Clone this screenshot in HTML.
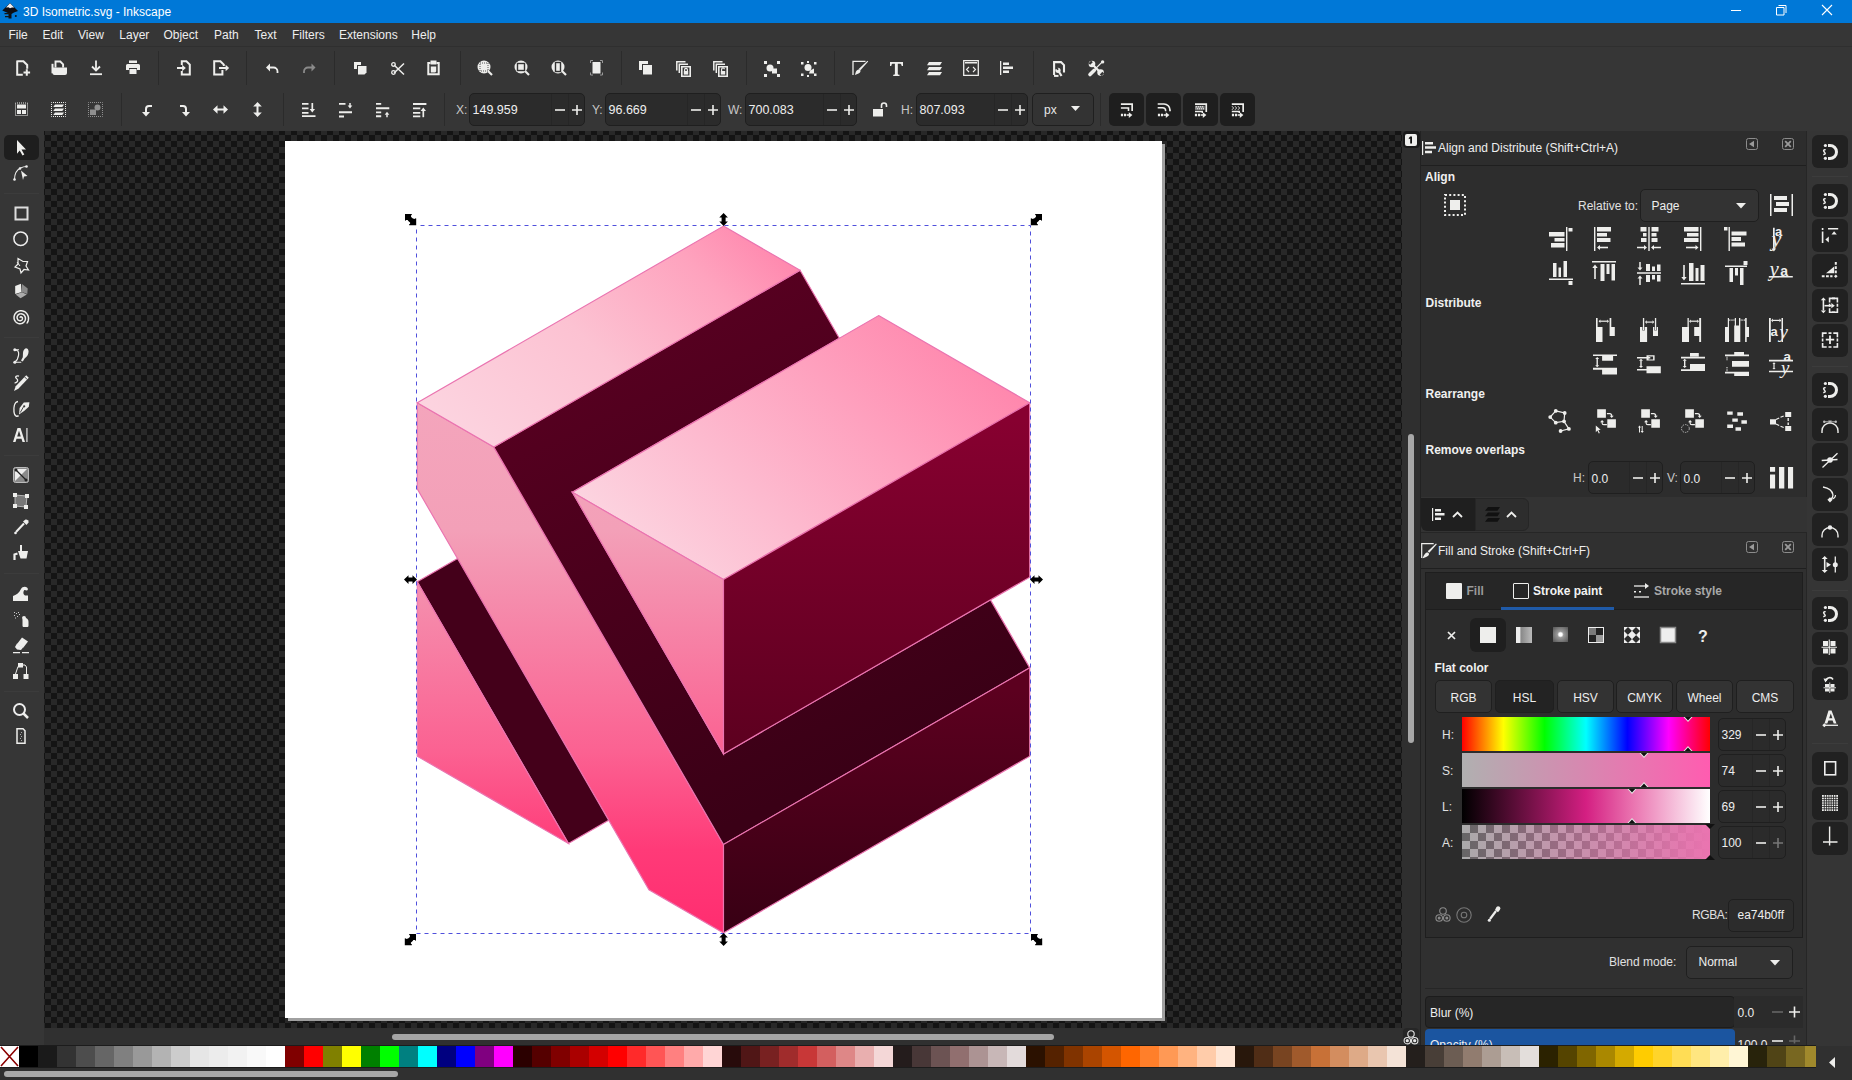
<!DOCTYPE html><html><head><meta charset="utf-8"><style>
*{box-sizing:border-box}
html,body{margin:0;padding:0}
body{width:1852px;height:1080px;overflow:hidden;position:relative;background:#333333;font-family:"Liberation Sans", sans-serif;font-size:12px;color:#e6e6e6}
.a{position:absolute}
.t{position:absolute;white-space:pre;line-height:1}
svg{position:absolute;overflow:visible}
</style></head><body><div class="a" style="left:44px;top:131px;width:1358px;height:897px;background-color:#282828;background-image:linear-gradient(45deg,#141414 25%,transparent 25%,transparent 75%,#141414 75%),linear-gradient(45deg,#141414 25%,transparent 25%,transparent 75%,#141414 75%);background-size:12px 12px;background-position:-41px -128px,-47px -134px"></div><div class="a" style="left:1162px;top:144px;width:3px;height:877px;background:#a0a0a0;"></div><div class="a" style="left:288px;top:1018px;width:877px;height:3px;background:#a0a0a0;"></div><div class="a" style="left:285px;top:141px;width:877px;height:877px;background:#ffffff;"></div><svg style="left:0;top:0" width="1852" height="1080" viewBox="0 0 1852 1080"><defs><linearGradient id="gtA" gradientUnits="userSpaceOnUse" x1="417.2" y1="402.8" x2="674.9" y2="145.1"><stop offset="0" stop-color="#fcd4e0"/><stop offset="0.45" stop-color="#fcc2d2"/><stop offset="0.8" stop-color="#fea3be"/><stop offset="1" stop-color="#ff88ae"/></linearGradient><linearGradient id="gtB" gradientUnits="userSpaceOnUse" x1="570.4" y1="491.1" x2="844.2" y2="217.3"><stop offset="0" stop-color="#fcd4e0"/><stop offset="1" stop-color="#ff87ad"/></linearGradient><linearGradient id="gl" gradientUnits="userSpaceOnUse" x1="0" y1="403" x2="0" y2="932"><stop offset="0" stop-color="#f4a5bc"/><stop offset="0.24" stop-color="#f3a0b8"/><stop offset="0.372" stop-color="#f58cac"/><stop offset="0.656" stop-color="#fb6292"/><stop offset="0.845" stop-color="#ff3a78"/><stop offset="1" stop-color="#ff2d70"/></linearGradient><linearGradient id="gd" gradientUnits="userSpaceOnUse" x1="800" y1="270" x2="1000" y2="700"><stop offset="0" stop-color="#560020"/><stop offset="1" stop-color="#3a0016"/></linearGradient><linearGradient id="gr2" gradientUnits="userSpaceOnUse" x1="0" y1="420" x2="0" y2="756"><stop offset="0" stop-color="#870030"/><stop offset="1" stop-color="#5c001f"/></linearGradient><linearGradient id="gr3" gradientUnits="userSpaceOnUse" x1="0" y1="690" x2="0" y2="932"><stop offset="0" stop-color="#5c001f"/><stop offset="1" stop-color="#380014"/></linearGradient><linearGradient id="gl2" gradientUnits="userSpaceOnUse" x1="0" y1="491" x2="0" y2="757"><stop offset="0" stop-color="#f4a5bc"/><stop offset="1" stop-color="#fa5890"/></linearGradient><linearGradient id="gl3" gradientUnits="userSpaceOnUse" x1="0" y1="581" x2="0" y2="845"><stop offset="0" stop-color="#f68cac"/><stop offset="1" stop-color="#ff2a70"/></linearGradient></defs><polygon points="417.25,402.80 493.81,446.98 723.50,844.55 723.50,932.90 648.93,889.87 417.25,488.85" fill="url(#gl)" stroke="#ea74b0" stroke-width="1.15"/><polygon points="417.25,581.80 457.52,558.56 608.66,820.17 568.38,843.40" fill="#44001a" stroke="#ea74b0" stroke-width="1.15"/><polygon points="417.25,581.80 417.25,756.20 568.38,843.40" fill="url(#gl)" stroke="#ea74b0" stroke-width="1.15"/><polygon points="493.81,446.98 800.06,270.27 839.34,338.26 572.37,492.30 723.50,753.90 990.47,599.86 1029.75,667.85 723.50,844.55" fill="url(#gd)" stroke="#ea74b0" stroke-width="1.15"/><polygon points="723.50,226.10 800.06,270.27 493.81,446.98 417.25,402.80" fill="url(#gtA)" stroke="#ea74b0" stroke-width="1.15"/><polygon points="878.62,315.60 1029.75,402.80 723.50,579.50 572.37,492.30" fill="url(#gtB)" stroke="#ea74b0" stroke-width="1.15"/><polygon points="572.37,492.30 723.50,579.50 723.50,753.90" fill="url(#gl)" stroke="#ea74b0" stroke-width="1.15"/><polygon points="1029.75,402.80 1029.75,577.20 723.50,753.90 723.50,579.50" fill="url(#gr2)" stroke="#ea74b0" stroke-width="1.15"/><polygon points="1029.75,667.85 1029.75,756.20 723.50,932.90 723.50,844.55" fill="url(#gr3)" stroke="#ea74b0" stroke-width="1.15"/><rect x="416.5" y="225.5" width="614" height="708" fill="none" stroke="#5050dc" stroke-width="1" stroke-dasharray="4 4" stroke-dashoffset="4"/><path transform="translate(405,214)" d="M0 0H7.1L6 1.7 6.1 2.9 7.9 4.6 10.1 5.1 10.6 4.1 11.2 4.6V11.2H4.2L4.1 10.2 5.1 9.7 5.1 8.4 4.1 7.7 3.1 6.7 2.7 5.9 1 6 0.5 6.9 0 6.3Z" fill="#000"/><path transform="translate(1031,934)" d="M0 0H7.1L6 1.7 6.1 2.9 7.9 4.6 10.1 5.1 10.6 4.1 11.2 4.6V11.2H4.2L4.1 10.2 5.1 9.7 5.1 8.4 4.1 7.7 3.1 6.7 2.7 5.9 1 6 0.5 6.9 0 6.3Z" fill="#000"/><path transform="translate(1042,214) scale(-1,1)" d="M0 0H7.1L6 1.7 6.1 2.9 7.9 4.6 10.1 5.1 10.6 4.1 11.2 4.6V11.2H4.2L4.1 10.2 5.1 9.7 5.1 8.4 4.1 7.7 3.1 6.7 2.7 5.9 1 6 0.5 6.9 0 6.3Z" fill="#000"/><path transform="translate(416,934) scale(-1,1)" d="M0 0H7.1L6 1.7 6.1 2.9 7.9 4.6 10.1 5.1 10.6 4.1 11.2 4.6V11.2H4.2L4.1 10.2 5.1 9.7 5.1 8.4 4.1 7.7 3.1 6.7 2.7 5.9 1 6 0.5 6.9 0 6.3Z" fill="#000"/><path transform="translate(404,575)" d="M0 4.6L4.5 0.3V2.6H8.5V0.3L13 4.6 8.5 8.9V6.6H4.5V8.9Z" fill="#000"/><path transform="translate(1030,575)" d="M0 4.6L4.5 0.3V2.6H8.5V0.3L13 4.6 8.5 8.9V6.6H4.5V8.9Z" fill="#000"/><path transform="translate(719,213)" d="M4.6 0L8.9 4.5H6.6V8.5H8.9L4.6 13 0.3 8.5H2.6V4.5H0.3Z" fill="#000"/><path transform="translate(719,933)" d="M4.6 0L8.9 4.5H6.6V8.5H8.9L4.6 13 0.3 8.5H2.6V4.5H0.3Z" fill="#000"/></svg><div class="a" style="left:44px;top:1028px;width:1358px;height:18px;background:#303030;"></div><div class="a" style="left:392px;top:1034px;width:662px;height:6px;background:#a5a5a5;border-radius:3px"></div><div class="a" style="left:0px;top:0px;width:1852px;height:23px;background:#0078d7;"></div><svg style="left:0px;top:0px" width="22" height="22" viewBox="0 0 22 22"><path d="M10 3L18 11L14 12.5L11.5 14V18.5H8.5V13.2L2.3 10.5Z" fill="#0d0d12" /><path d="M10 3.2L6 7.5L8.5 7.2L10 8.2L12 7.4L14.2 7.6Z" fill="#f0f0f0" /><path d="M4.5 13h6v1.3h-6zM5 16h4v1.3H5z" fill="#151515" /><circle cx="15.8" cy="16" r="1" fill="#111"/></svg><div class="t" style="left:23px;top:5.84px;font-size:12px;color:#ffffff;font-weight:400;">3D Isometric.svg - Inkscape</div><svg style="left:1730px;top:3px" width="20" height="14"><path d="M1 7.5h10" stroke="#fff" stroke-width="1"/></svg><svg style="left:1775px;top:3px" width="14" height="14"><path d="M3.5 2.5h7.5v7.5M1.5 4.5h7.5v7.5h-7.5z" fill="none" stroke="#fff" stroke-width="1"/></svg><svg style="left:1821px;top:4px" width="14" height="14"><path d="M1 1l10 10M11 1L1 11" stroke="#fff" stroke-width="1.1"/></svg><div class="a" style="left:0px;top:23px;width:1852px;height:23px;background:#363636;"></div><div class="t" style="left:8.4px;top:28.84px;font-size:12px;color:#eeeeee;font-weight:400;">File</div><div class="t" style="left:42.5px;top:28.84px;font-size:12px;color:#eeeeee;font-weight:400;">Edit</div><div class="t" style="left:78px;top:28.84px;font-size:12px;color:#eeeeee;font-weight:400;">View</div><div class="t" style="left:119.3px;top:28.84px;font-size:12px;color:#eeeeee;font-weight:400;">Layer</div><div class="t" style="left:163.4px;top:28.84px;font-size:12px;color:#eeeeee;font-weight:400;">Object</div><div class="t" style="left:214px;top:28.84px;font-size:12px;color:#eeeeee;font-weight:400;">Path</div><div class="t" style="left:254.5px;top:28.84px;font-size:12px;color:#eeeeee;font-weight:400;">Text</div><div class="t" style="left:292px;top:28.84px;font-size:12px;color:#eeeeee;font-weight:400;">Filters</div><div class="t" style="left:339px;top:28.84px;font-size:12px;color:#eeeeee;font-weight:400;">Extensions</div><div class="t" style="left:411.3px;top:28.84px;font-size:12px;color:#eeeeee;font-weight:400;">Help</div><div class="a" style="left:0px;top:46px;width:1852px;height:85px;background:#363636;"></div><div class="a" style="left:0px;top:46px;width:1852px;height:1px;background:#2f2f2f;"></div><div class="a" style="left:158px;top:51px;width:1px;height:34px;background:#2b2b2b;"></div><div class="a" style="left:246px;top:51px;width:1px;height:34px;background:#2b2b2b;"></div><div class="a" style="left:334px;top:51px;width:1px;height:34px;background:#2b2b2b;"></div><div class="a" style="left:460px;top:51px;width:1px;height:34px;background:#2b2b2b;"></div><div class="a" style="left:621px;top:51px;width:1px;height:34px;background:#2b2b2b;"></div><div class="a" style="left:746px;top:51px;width:1px;height:34px;background:#2b2b2b;"></div><div class="a" style="left:834px;top:51px;width:1px;height:34px;background:#2b2b2b;"></div><div class="a" style="left:1033px;top:51px;width:1px;height:34px;background:#2b2b2b;"></div><div class="a" style="left:121px;top:93px;width:1px;height:33px;background:#2b2b2b;"></div><div class="a" style="left:283px;top:93px;width:1px;height:33px;background:#2b2b2b;"></div><div class="a" style="left:444px;top:93px;width:1px;height:33px;background:#2b2b2b;"></div><div class="a" style="left:1100px;top:93px;width:1px;height:33px;background:#2b2b2b;"></div><svg style="left:16px;top:60px" width="16" height="16" viewBox="0 0 16 16"><path d="M1.2 1.2h6.2l3.8 3.8v3.8M1.2 0.4v14.4h5.6" fill="none" stroke="#eeeeec" stroke-width="2" /><path d="M10.8 9.2v6.6M7.5 12.5h6.6" fill="none" stroke="#eeeeec" stroke-width="2" /></svg><svg style="left:51px;top:60px" width="16" height="16" viewBox="0 0 16 16"><path d="M4.5 7.5V1.5h4.8l2.8 2.8V7.5" fill="none" stroke="#eeeeec" stroke-width="1.9" /><path d="M1.5 3.8v9.5" fill="none" stroke="#eeeeec" stroke-width="2" /><path d="M1.5 7.5h14.5v5.5a2 2 0 0 1-2 2h-10.5a2 2 0 0 1-2-2z" fill="#eeeeec" /></svg><svg style="left:90px;top:60px" width="16" height="16" viewBox="0 0 16 16"><path d="M6 0.5v9.5" fill="none" stroke="#eeeeec" stroke-width="1.8" /><path d="M2 6.5l4 4 4-4" fill="none" stroke="#eeeeec" stroke-width="1.8" /><path d="M0 14.2h12" fill="none" stroke="#eeeeec" stroke-width="1.8" /></svg><svg style="left:126px;top:60px" width="16" height="16" viewBox="0 0 16 16"><path d="M3 0.5h8v2.5h-8z" fill="#eeeeec" /><path d="M1.5 4h11a1.5 1.5 0 0 1 1.5 1.5v4.5h-3v-2h-8v2h-3v-4.5a1.5 1.5 0 0 1 1.5-1.5z" fill="#eeeeec" /><path d="M3.5 9h7v5h-7z" fill="#eeeeec" /></svg><svg style="left:177px;top:60px" width="16" height="16" viewBox="0 0 16 16"><path d="M4.8 5V1.2h4.6l3.4 3.4V14.4H4.8V11" fill="none" stroke="#eeeeec" stroke-width="2" /><path d="M0 8h6.5" fill="none" stroke="#eeeeec" stroke-width="2" /><path d="M5.2 4.8l3.6 3.2-3.6 3.2z" fill="#eeeeec" /></svg><svg style="left:213px;top:60px" width="16" height="16" viewBox="0 0 16 16"><path d="M10.8 6V4.6L7.4 1.2H1.2v13.2h8.2V10" fill="none" stroke="#eeeeec" stroke-width="2" /><path d="M6 8h7.5" fill="none" stroke="#eeeeec" stroke-width="2" /><path d="M12.6 4.8l3.6 3.2-3.6 3.2z" fill="#eeeeec" /></svg><svg style="left:266px;top:63px" width="16" height="16" viewBox="0 0 16 16"><path d="M2.5 4.5h5a4 4 0 0 1 4 4V10" fill="none" stroke="#eeeeec" stroke-width="1.8" /><path d="M0 4.5l4-4v8z" fill="#eeeeec" /></svg><svg style="left:303px;top:63px" width="16" height="16" viewBox="0 0 16 16"><path d="M10 4.5h-5a4 4 0 0 0-4 4V10" fill="none" stroke="#8a8a8a" stroke-width="1.8" /><path d="M12.5 4.5l-4-4v8z" fill="#8a8a8a" /></svg><svg style="left:354px;top:62px" width="16" height="16" viewBox="0 0 16 16"><path d="M0 0h7v3h-4v4h-3z" fill="#eeeeec" /><path d="M4 4h8.5v6.5l-2 2h-6.5z" fill="#eeeeec" /></svg><svg style="left:391px;top:62px" width="14" height="13" viewBox="0 0 14 13"><path d="M3 3l10 9.5M13 1.5L3 11" fill="none" stroke="#eeeeec" stroke-width="1.5" /><circle cx="2.5" cy="2.5" r="1.8" fill="none" stroke="#eeeeec" stroke-width="1.3"/><circle cx="2.5" cy="10.5" r="1.8" fill="none" stroke="#eeeeec" stroke-width="1.3"/></svg><svg style="left:427px;top:60px" width="16" height="16" viewBox="0 0 16 16"><path d="M9.5 3h2.2v11.3H1.3V3h2.2" fill="none" stroke="#eeeeec" stroke-width="2" /><path d="M3.5 0.5h6v4h-6z" fill="#eeeeec" /><path d="M3.8 6.5h5.4v5l-1 1H3.8z" fill="#eeeeec" /></svg><svg style="left:477px;top:60px" width="16" height="16" viewBox="0 0 16 16"><circle cx="7" cy="7" r="6.5" fill="#eeeeec"/><path d="M11 11l4 4" fill="none" stroke="#eeeeec" stroke-width="2.2" /><rect x="3" y="3" width="8" height="8" fill="#eeeeec" stroke="#555" stroke-width="1" stroke-dasharray="1 1"/></svg><svg style="left:514px;top:60px" width="16" height="16" viewBox="0 0 16 16"><circle cx="7" cy="7" r="6.5" fill="#eeeeec"/><path d="M11 11l4 4" fill="none" stroke="#eeeeec" stroke-width="2.2" /><rect x="3.5" y="3.5" width="7" height="7" fill="none" stroke="#333" stroke-width="1.4"/></svg><svg style="left:551px;top:60px" width="16" height="16" viewBox="0 0 16 16"><circle cx="7" cy="7" r="6.5" fill="#eeeeec"/><path d="M11 11l4 4" fill="none" stroke="#eeeeec" stroke-width="2.2" /><rect x="4.5" y="2.5" width="5" height="9" fill="none" stroke="#333" stroke-width="1.4"/></svg><svg style="left:590px;top:60px" width="13" height="16" viewBox="0 0 13 16"><path d="M2.5 2h8v11.5h-8z" fill="#eeeeec" /><path d="M0.5 3V0.5H3M10 0.5h2.5V3M0.5 12.5V15H3M10 15h2.5v-2.5" fill="none" stroke="#999" stroke-width="1" /></svg><svg style="left:639px;top:61px" width="16" height="16" viewBox="0 0 16 16"><path d="M0 0h9v3h-6v6h-3z" fill="#eeeeec" /><path d="M4 4h9v9.5h-9z" fill="#eeeeec" /></svg><svg style="left:676px;top:61px" width="16" height="16" viewBox="0 0 16 16"><path d="M0.8 9.5V0.8h8.7" fill="none" stroke="#eeeeec" stroke-width="1.5" /><path d="M3.3 12V3.3h8.7" fill="none" stroke="#eeeeec" stroke-width="1.5" /><path d="M5.8 15.2V5.8h8.4v9.4z" fill="none" stroke="#eeeeec" stroke-width="1.6" /><path d="M7.8 10h4.4v3.6H7.8z" fill="#eeeeec" /><path d="M8.6 10.2V8.8a1.4 1.4 0 0 1 2.8 0v1.4" fill="none" stroke="#eeeeec" stroke-width="1.2" /></svg><svg style="left:713px;top:61px" width="16" height="16" viewBox="0 0 16 16"><path d="M0.8 9.5V0.8h8.7" fill="none" stroke="#eeeeec" stroke-width="1.5" /><path d="M3.3 12V3.3h8.7" fill="none" stroke="#eeeeec" stroke-width="1.5" /><path d="M5.8 15.2V5.8h8.4v9.4z" fill="none" stroke="#eeeeec" stroke-width="1.6" /><path d="M7.8 10h4.4v3.6H7.8z" fill="#eeeeec" /><path d="M8.6 10.2V8.3a1.4 1.4 0 0 1 2.8 0" fill="none" stroke="#eeeeec" stroke-width="1.2" /></svg><svg style="left:764px;top:61px" width="16" height="16" viewBox="0 0 16 16"><path d="M0 0h3v3h-3zM13 0h3v3h-3zM0 13h3v3h-3zM13 13h3v3h-3z" fill="#eeeeec" /><circle cx="6" cy="7" r="3.5" fill="#eeeeec"/><path d="M8 7.5h5v5h-5z" fill="#eeeeec" /></svg><svg style="left:801px;top:61px" width="16" height="16" viewBox="0 0 16 16"><path d="M0 1h2.5v2.5h-2.5zM13 1h2.5v2.5h-2.5zM0 12.5h2.5v2.5h-2.5zM13 12.5h2.5v2.5h-2.5zM6 0h2v2h-2zM6 14h2v2h-2z" fill="#eeeeec" /><circle cx="7" cy="6.5" r="3.5" fill="#eeeeec"/><path d="M9 9.5l4-2v5h-5z" fill="#eeeeec" /></svg><svg style="left:852px;top:60px" width="16" height="16" viewBox="0 0 16 16"><path d="M1 15V1.3h12.5" fill="none" stroke="#eeeeec" stroke-width="1.3" /><path d="M15.5 0.8l0.7 0.7-8 9-1.5-1.5z" fill="#eeeeec" /><path d="M4 11.5c1.5-2 3-2.5 4-1.5s0.5 2.5-1.5 3.5c-1 0.5-2.5 1-3.5 1.5c0.3-1 0.5-2.5 1-3.5z" fill="#eeeeec" /></svg><svg style="left:890px;top:62px" width="14" height="14" viewBox="0 0 14 14"><path d="M0 0h13v4h-1.3c-0.2-1.7-0.8-2.3-2.4-2.3h-1.5v10c0 0.8 0.5 1.1 1.7 1.1v1.2h-6.3v-1.2c1.2 0 1.7-0.3 1.7-1.1V1.7H3.4C1.8 1.7 1.5 2.3 1.3 4H0z" fill="#eeeeec" /></svg><svg style="left:927px;top:62px" width="15" height="14" viewBox="0 0 15 14"><path d="M2 0h13l-2 3.2h-13zM2 5h13l-2 3.2h-13zM2 10h13l-2 3.2h-13z" fill="#eeeeec" /></svg><svg style="left:963px;top:60px" width="16" height="16" viewBox="0 0 16 16"><path d="M0.7 0.7h14.6v14.6H0.7z" fill="none" stroke="#eeeeec" stroke-width="1.3" /><path d="M2 2h12v1.5h-12z" fill="#eeeeec" /><path d="M6 7l-2.5 2.5 2.5 2.5M10 7l2.5 2.5L10 12" fill="none" stroke="#eeeeec" stroke-width="1.1" /></svg><svg style="left:1000px;top:61px" width="16" height="16" viewBox="0 0 16 16"><path d="M0 0h1.3v14h-1.3z" fill="#eeeeec" /><path d="M3 1.5h6v2.5h-6zM3 5.5h10v2.5h-10zM3 9.5h6v2.5h-6z" fill="#eeeeec" /></svg><svg style="left:1052px;top:60px" width="15" height="17" viewBox="0 0 15 17"><path d="M2.1 15V2.1H9L12 5.1V12.6" fill="none" stroke="#eeeeec" stroke-width="2.1" /><path d="M2 15.9h4.5" fill="none" stroke="#eeeeec" stroke-width="2" /><circle cx="6" cy="10.3" r="2.6" fill="#eeeeec"/><path d="M3.5 8.5l2.2 1.8 1-1.2-2-2z" fill="#363636" /><path d="M6.5 11l3 5" fill="none" stroke="#eeeeec" stroke-width="2.2" /></svg><svg style="left:1088px;top:60px" width="17" height="17" viewBox="0 0 17 17"><path d="M5 5L12 12" fill="none" stroke="#eeeeec" stroke-width="2.2" /><circle cx="4" cy="4" r="3.3" fill="#eeeeec"/><circle cx="12.6" cy="12.6" r="3.3" fill="#eeeeec"/><path d="M0.5 3.2L3.2 0.5 4.8 2.2 2.2 4.8z" fill="#363636" /><path d="M16.1 13.4L13.4 16.1 11.8 14.4 14.4 11.8z" fill="#363636" /><path d="M6.2 10L14.3 1.9" fill="none" stroke="#eeeeec" stroke-width="1.2" /><circle cx="14.6" cy="1.9" r="1.7" fill="#eeeeec"/><path d="M2 14.6L6.3 10.3" fill="none" stroke="#eeeeec" stroke-width="3.6" stroke-linecap="round"/></svg><svg style="left:15px;top:102px" width="13" height="14" viewBox="0 0 13 14"><rect x="0.5" y="1" width="12" height="12.5" fill="none" stroke="#eeeeec" stroke-width="1" stroke-dasharray="1 1" stroke-dashoffset="0.5"/><path d="M2 2.5h9v4H2zM2 8h4v4H2zM7 8h4v4H7z" fill="#eeeeec" /></svg><svg style="left:51px;top:102px" width="15" height="15" viewBox="0 0 15 15"><rect x="0.5" y="0.5" width="14" height="14" fill="none" stroke="#eeeeec" stroke-width="1" stroke-dasharray="1 1" stroke-dashoffset="0.5"/><path d="M4 2.5h9l-1.7 2.5h-9zM4 6.5h9l-1.7 2.5h-9zM4 10.5h9l-1.7 2.5h-9z" fill="#eeeeec" /></svg><svg style="left:88px;top:102px" width="15" height="15" viewBox="0 0 15 15"><rect x="0.5" y="0.5" width="14" height="14" fill="none" stroke="#8f8f8f" stroke-width="1" stroke-dasharray="1 1" stroke-dashoffset="0.5"/><circle cx="9.5" cy="5.5" r="3" fill="#8f8f8f"/><path d="M2 7.5h6v5.5h-6z" fill="#8f8f8f" /></svg><svg style="left:141px;top:104px" width="12" height="13" viewBox="0 0 12 13"><path d="M11 2h-3a3 3 0 0 0-3 3v5" fill="none" stroke="#eeeeec" stroke-width="2" /><path d="M1 8l4 4.5 4-4.5z" fill="#eeeeec" /></svg><svg style="left:179px;top:104px" width="12" height="13" viewBox="0 0 12 13"><path d="M1 2h3a3 3 0 0 1 3 3v5" fill="none" stroke="#eeeeec" stroke-width="2" /><path d="M3 8l4 4.5 4-4.5z" fill="#eeeeec" /></svg><svg style="left:213px;top:105px" width="15" height="9" viewBox="0 0 15 9"><path d="M3 4.5h9" fill="none" stroke="#eeeeec" stroke-width="2" /><path d="M0 4.5l4.5-4.3v8.6zM15 4.5l-4.5-4.3v8.6z" fill="#eeeeec" /></svg><svg style="left:253px;top:102px" width="9" height="15" viewBox="0 0 9 15"><path d="M4.5 3v9" fill="none" stroke="#eeeeec" stroke-width="2" /><path d="M4.5 0l4.3 4.5h-8.6zM4.5 15l4.3-4.5h-8.6z" fill="#eeeeec" /></svg><svg style="left:302px;top:103px" width="14" height="15" viewBox="0 0 14 15"><path d="M0 0h6.5v1.7H0zM0 4.5h6.5v1.7H0zM0 9h6.5v1.7H0zM0 12.2h13.5v1.9H0z" fill="#eeeeec" /><path d="M10.3 0v7" fill="none" stroke="#eeeeec" stroke-width="1.7" /><path d="M7.6 6l2.7 3.5 2.7-3.5z" fill="#eeeeec" /></svg><svg style="left:339px;top:103px" width="14" height="15" viewBox="0 0 14 15"><path d="M0 0h6.5v1.7H0zM0 8.3h13v2H0zM0 12.5h5v2H0z" fill="#eeeeec" /><path d="M11 0v3" fill="none" stroke="#eeeeec" stroke-width="1.5" /><path d="M8.7 2.5l2.3 3 2.3-3z" fill="#eeeeec" /></svg><svg style="left:376px;top:103px" width="14" height="15" viewBox="0 0 14 15"><path d="M0 0h5.2v1.7H0zM0 4.3h13.3v1.9H0zM0 8.5h5.2v1.7H0zM0 12.2h5.2v2H0z" fill="#eeeeec" /><path d="M11 14.2v-3" fill="none" stroke="#eeeeec" stroke-width="1.5" /><path d="M8.7 11.7l2.3-3 2.3 3z" fill="#eeeeec" /></svg><svg style="left:413px;top:103px" width="14" height="15" viewBox="0 0 14 15"><path d="M0 0h13.4v2H0zM0 4.5h7.3v1.7H0zM0 9h7.3v1.7H0zM0 12.4h7.3v1.8H0z" fill="#eeeeec" /><path d="M10.3 14.2V7.5" fill="none" stroke="#eeeeec" stroke-width="1.7" /><path d="M7.6 8l2.7-3.5L13 8z" fill="#eeeeec" /></svg><div class="a" style="left:469px;top:93px;width:116px;height:33px;background:#2b2b2b;border:1px solid #1f1f1f;border-radius:5px"></div><div class="a" style="left:551px;top:94px;width:1px;height:31px;background:#262626;"></div><div class="a" style="left:568px;top:94px;width:1px;height:31px;background:#262626;"></div><svg style="left:554px;top:103.5px" width="12" height="12"><path d="M1 6h10" stroke="#eeeeec" stroke-width="1.6"/></svg><svg style="left:571px;top:103.5px" width="12" height="12"><path d="M1 6h10M6 1v10" stroke="#eeeeec" stroke-width="1.6"/></svg><div class="t" style="left:472.5px;top:104.12px;font-size:12.5px;color:#eeeeee;font-weight:400;">149.959</div><div class="t" style="left:456px;top:103.84px;font-size:12px;color:#c8c8c8;font-weight:400;">X:</div><div class="a" style="left:605px;top:93px;width:116px;height:33px;background:#2b2b2b;border:1px solid #1f1f1f;border-radius:5px"></div><div class="a" style="left:687px;top:94px;width:1px;height:31px;background:#262626;"></div><div class="a" style="left:704px;top:94px;width:1px;height:31px;background:#262626;"></div><svg style="left:690px;top:103.5px" width="12" height="12"><path d="M1 6h10" stroke="#eeeeec" stroke-width="1.6"/></svg><svg style="left:707px;top:103.5px" width="12" height="12"><path d="M1 6h10M6 1v10" stroke="#eeeeec" stroke-width="1.6"/></svg><div class="t" style="left:608.5px;top:104.12px;font-size:12.5px;color:#eeeeee;font-weight:400;">96.669</div><div class="t" style="left:592px;top:103.84px;font-size:12px;color:#c8c8c8;font-weight:400;">Y:</div><div class="a" style="left:745px;top:93px;width:112px;height:33px;background:#2b2b2b;border:1px solid #1f1f1f;border-radius:5px"></div><div class="a" style="left:823px;top:94px;width:1px;height:31px;background:#262626;"></div><div class="a" style="left:840px;top:94px;width:1px;height:31px;background:#262626;"></div><svg style="left:826px;top:103.5px" width="12" height="12"><path d="M1 6h10" stroke="#eeeeec" stroke-width="1.6"/></svg><svg style="left:843px;top:103.5px" width="12" height="12"><path d="M1 6h10M6 1v10" stroke="#eeeeec" stroke-width="1.6"/></svg><div class="t" style="left:748.5px;top:104.12px;font-size:12.5px;color:#eeeeee;font-weight:400;">700.083</div><div class="t" style="left:728px;top:103.84px;font-size:12px;color:#c8c8c8;font-weight:400;">W:</div><div class="a" style="left:916px;top:93px;width:112px;height:33px;background:#2b2b2b;border:1px solid #1f1f1f;border-radius:5px"></div><div class="a" style="left:994px;top:94px;width:1px;height:31px;background:#262626;"></div><div class="a" style="left:1011px;top:94px;width:1px;height:31px;background:#262626;"></div><svg style="left:997px;top:103.5px" width="12" height="12"><path d="M1 6h10" stroke="#eeeeec" stroke-width="1.6"/></svg><svg style="left:1014px;top:103.5px" width="12" height="12"><path d="M1 6h10M6 1v10" stroke="#eeeeec" stroke-width="1.6"/></svg><div class="t" style="left:919.5px;top:104.12px;font-size:12.5px;color:#eeeeee;font-weight:400;">807.093</div><div class="t" style="left:901px;top:103.84px;font-size:12px;color:#c8c8c8;font-weight:400;">H:</div><svg style="left:873px;top:102px" width="15" height="15" viewBox="0 0 15 15"><path d="M8.5 6V3.5a2.5 2.5 0 0 1 5 0V5" fill="none" stroke="#eeeeec" stroke-width="1.6" /><path d="M0 7h10v7.5h-10z" fill="#eeeeec" /></svg><div class="a" style="left:1032px;top:93px;width:62px;height:33px;background:#333;border:1px solid #1f1f1f;border-radius:5px"></div><div class="t" style="left:1044px;top:104.34px;font-size:12px;color:#e8e8e8;font-weight:400;">px</div><svg style="left:1071px;top:106px" width="9" height="6" viewBox="0 0 9 6"><path d="M0 0h9l-4.5 5z" fill="#eeeeec" /></svg><div class="a" style="left:1109px;top:93px;width:35px;height:33px;background:#1e1e1e;border-radius:5px"></div><div class="a" style="left:1146px;top:93px;width:35px;height:33px;background:#1e1e1e;border-radius:5px"></div><div class="a" style="left:1183px;top:93px;width:35px;height:33px;background:#1e1e1e;border-radius:5px"></div><div class="a" style="left:1220px;top:93px;width:35px;height:33px;background:#1e1e1e;border-radius:5px"></div><svg style="left:1118px;top:102px" width="16" height="17" viewBox="0 0 16 17"><path d="M2.9 1.2H15v1.7H2.9zM13.3 1.2H15V9h-1.7zM2.9 5.2h8.4v1.6H2.9zM9.7 5.2h1.6V9H9.7z" fill="#eeeeec" /><path d="M2.9 11.8h2.1v2.4H2.9zM5.9 11.8h2.1v2.4H5.9zM8.6 12.3h2.6v1.5H8.6z" fill="#eeeeec" /><path d="M10.8 10.3l3.6 2.7-3.6 2.9z" fill="#eeeeec" /></svg><svg style="left:1155px;top:102px" width="16" height="17" viewBox="0 0 16 17"><path d="M2.7 2H9a6 6 0 0 1 6 6v1.2" fill="none" stroke="#eeeeec" stroke-width="1.7" /><path d="M2.7 5.8H7.5a3.2 3.2 0 0 1 3.2 3.2v0.3" fill="none" stroke="#eeeeec" stroke-width="1.5" /><path d="M2.9 11.8h2.1v2.4H2.9zM5.9 11.8h2.1v2.4H5.9zM8.6 12.3h2.6v1.5H8.6z" fill="#eeeeec" /><path d="M10.8 10.3l3.6 2.7-3.6 2.9z" fill="#eeeeec" /></svg><svg style="left:1192px;top:102px" width="16" height="17" viewBox="0 0 16 17"><path d="M3 1.2h12.1v1.7H3zM13.4 1.2h1.7V10h-1.7zM3 8.8h8v1.5H3zM9.6 8.8H11V11H9.6z" fill="#eeeeec" /><path d="M3 3.8h9.6v4H3z" fill="#8a8a8a" /><path d="M4 4.3h1v1H4zM6 4.3h1v1H6zM8 4.3h1v1H8zM10 4.3h1v1h-1zM5 6.3h1v1H5zM7 6.3h1v1H7zM9 6.3h1v1H9zM11 6.3h1v1h-1z" fill="#eee" /><path d="M2.9 11.8h2.1v2.4H2.9zM5.9 11.8h2.1v2.4H5.9zM8.6 12.3h2.6v1.5H8.6z" fill="#eeeeec" /><path d="M10.8 10.3l3.6 2.7-3.6 2.9z" fill="#eeeeec" /></svg><svg style="left:1229px;top:102px" width="16" height="17" viewBox="0 0 16 17"><path d="M2.8 1.2H15v1.7H2.8zM13.3 1.2H15V10h-1.7zM2.8 8.8h8.2v1.5H2.8zM9.5 8.8H11V11H9.5z" fill="#eeeeec" /><path d="M3 4.2l1.6 1.8L3 7.8M6 4.2l1.6 1.8L6 7.8M9 4.2l1.6 1.8L9 7.8" fill="none" stroke="#eeeeec" stroke-width="0.9" /><path d="M2.9 11.8h2.1v2.4H2.9zM5.9 11.8h2.1v2.4H5.9zM8.6 12.3h2.6v1.5H8.6z" fill="#eeeeec" /><path d="M10.8 10.3l3.6 2.7-3.6 2.9z" fill="#eeeeec" /></svg><div class="a" style="left:0px;top:131px;width:44px;height:915px;background:#363636;"></div><div class="a" style="left:4px;top:135px;width:35px;height:25px;background:#1e1e1e;border-radius:5px"></div><div class="a" style="left:4px;top:193px;width:35px;height:1px;background:#3c3c3c;"></div><div class="a" style="left:4px;top:337px;width:35px;height:1px;background:#3c3c3c;"></div><div class="a" style="left:4px;top:455px;width:35px;height:1px;background:#3c3c3c;"></div><div class="a" style="left:4px;top:573px;width:35px;height:1px;background:#3c3c3c;"></div><div class="a" style="left:4px;top:691px;width:35px;height:1px;background:#3c3c3c;"></div><svg style="left:17px;top:140px" width="10" height="15" viewBox="0 0 10 15"><path d="M0 0l9 9.5h-4.5l2.8 5-1.8 1-2.8-5-2.7 3.3z" fill="#eeeeec" /></svg><svg style="left:13px;top:165px" width="16" height="16" viewBox="0 0 16 16"><path d="M1.5 14.5c0-6 3-10 6-11.5s5-1.5 6-1.5" fill="none" stroke="#eeeeec" stroke-width="1.1" /><circle cx="1.5" cy="14.5" r="1.3" fill="#eee"/><circle cx="13.5" cy="1.5" r="1.3" fill="#eee"/><circle cx="7" cy="3.5" r="1.3" fill="#eee"/><path d="M8 5.5l6.5 5.5-3.5 0.5-1 3.5z" fill="#eeeeec" /></svg><svg style="left:14px;top:206px" width="15" height="15" viewBox="0 0 15 15"><rect x="1.5" y="1.5" width="12" height="12" fill="none" stroke="#ddd" stroke-width="2"/></svg><svg style="left:13px;top:231px" width="16" height="16" viewBox="0 0 16 16"><circle cx="7.7" cy="7.7" r="6.8" fill="none" stroke="#eee" stroke-width="1.5"/></svg><svg style="left:13px;top:257px" width="16" height="16" viewBox="0 0 16 16"><path d="M5 1.5l5 3 4.5 0-1.5 4.5 2.5 4-4.5-0.5-3 3.5-1-4-5-2 3-3z" fill="none" stroke="#eeeeec" stroke-width="1.2" /><path d="M4 5l3 4" fill="none" stroke="#eeeeec" stroke-width="1" /></svg><svg style="left:14px;top:282px" width="15" height="17" viewBox="0 0 15 17"><path d="M1.2 3.9L7 1.8 7.5 10 1.2 11.9Z" fill="#eeeeec" /><path d="M8 2L13.7 6.6 13.3 11.9 8 10Z" fill="#8a8a8a" /><path d="M1.7 12.4L8 10.2 12.8 12.4 6.5 16.2Z" fill="#ababab" /></svg><svg style="left:13px;top:310px" width="17" height="17" viewBox="0 0 17 17"><path d="M7.14 7.18 L7.28 7.03 L7.46 6.92 L7.68 6.84 L7.93 6.80 L8.19 6.83 L8.46 6.91 L8.72 7.05 L8.96 7.26 L9.17 7.52 L9.32 7.84 L9.41 8.20 L9.42 8.58 L9.36 8.97 L9.22 9.37 L8.99 9.74 L8.68 10.07 L8.30 10.34 L7.85 10.54 L7.36 10.65 L6.84 10.67 L6.31 10.58 L5.79 10.39 L5.30 10.08 L4.87 9.68 L4.52 9.19 L4.25 8.62 L4.10 8.00 L4.07 7.34 L4.17 6.67 L4.41 6.02 L4.77 5.40 L5.26 4.86 L5.85 4.41 L6.54 4.07 L7.29 3.87 L8.09 3.81 L8.90 3.91 L9.69 4.17 L10.44 4.58 L11.10 5.14 L11.66 5.83 L12.08 6.63 L12.35 7.51 L12.45 8.44 L12.37 9.39 L12.10 10.33 L11.65 11.21 L11.03 12.01 L10.25 12.68 L9.35 13.21 L8.35 13.55 L7.28 13.71 L6.19 13.65 L5.11 13.39 L4.08 12.91 L3.15 12.24 L2.35 11.40 L1.71 10.40 L1.27 9.28 L1.05 8.08 L1.06 6.85 L1.31 5.62 L1.79 4.44 L2.50 3.36 L3.41 2.43 L4.49 1.67 L5.72 1.13 L7.04 0.82 L8.42 0.78 L9.80 0.99 L11.12 1.47 L12.35 2.20 L13.43 3.16 L14.32 4.33 L14.98 5.65 L15.38 7.10 L15.50 8.61 L15.33 10.13 L14.87 11.61 L14.13 13.00" fill="none" stroke="#eeeeec" stroke-width="1.5" stroke-linecap="round"/></svg><svg style="left:13px;top:348px" width="17" height="17" viewBox="0 0 17 17"><path d="M1.8 1.8c3.2 0 4.2 2.2 3.8 5.2s-1 5.2-3.8 7.2" fill="none" stroke="#eeeeec" stroke-width="1.2" /><path d="M1.8 1.8h4.2M1.8 14.2h6.5" fill="none" stroke="#eeeeec" stroke-width="1.1" /><circle cx="1.8" cy="1.8" r="1.5" fill="#eee"/><circle cx="1.8" cy="14.2" r="1.5" fill="#eee"/><path d="M9.8 9.2l-1.8 3.2 1.8 1.2 1.8-3.2c2.4-1.4 4-4 4-6.8 0-2.2-1.2-3.4-2.6-3.4s-2.8 2.2-3 4.6z" fill="#eeeeec" /></svg><svg style="left:13px;top:374px" width="17" height="18" viewBox="0 0 17 18"><path d="M13.2 1.2L15.8 3.8 5.3 14.8 1 17 2.7 12.2Z" fill="#eeeeec" /><path d="M11.6 2.9l2.6 2.6" fill="none" stroke="#363636" stroke-width="0.9" /><path d="M6 2.2C3.2 1.2 1.6 3.2 3.5 4.6S5.2 8.2 1.6 9.2" fill="none" stroke="#eeeeec" stroke-width="1.3" /></svg><svg style="left:13px;top:400px" width="17" height="17" viewBox="0 0 17 17"><path d="M16.4 2.2L10.8 2.6 6.6 8 6 14.4 11.4 10.8 15.8 6.8z" fill="#eeeeec" /><path d="M10.6 6.6L7.2 12.6" fill="none" stroke="#363636" stroke-width="0.9" /><circle cx="11.2" cy="6.3" r="1.1" fill="#363636"/><path d="M5 1.5C1.2 2 0.6 8 1 12c0.4 4 3 5 4.6 3.6" fill="none" stroke="#eeeeec" stroke-width="1.4" /></svg><svg style="left:13px;top:427px" width="15" height="16" viewBox="0 0 15 16"><path d="M4.5 1h3L12 15H9.5l-1-3.2H3.5L2.5 15H0zM4.2 9.5h3.6L6 3.8z" fill="#eeeeec" /><path d="M13 1h1.8v14H13z" fill="#aaa" /></svg><svg style="left:13px;top:467px" width="16" height="16" viewBox="0 0 16 16"><rect x="0.5" y="0.5" width="15" height="15" rx="2" fill="#8a8a8a" stroke="#bbb"/><path d="M2 2h12L2 14z" fill="#eee" /><path d="M3 3l10 10" fill="none" stroke="#222" stroke-width="1.3" /><circle cx="3" cy="3" r="1.5" fill="#222"/><circle cx="13" cy="13" r="1.5" fill="#222"/></svg><svg style="left:13px;top:493px" width="16" height="16" viewBox="0 0 16 16"><path d="M2 2l12 1-1 11-11-1z" fill="#777" /><path d="M2 2l12 1-1 11-11-1z" fill="none" stroke="#ccc" stroke-width="0.8" /><path d="M0 0h4v4h-4zM12 1h4v4h-4zM11 12h4v4h-4zM0 11h4v4h-4z" fill="#eeeeec" /></svg><svg style="left:13px;top:519px" width="16" height="16" viewBox="0 0 16 16"><path d="M12.5 0.5a2.5 2.5 0 0 1 3 3l-2 2.5-3.5-3.5z" fill="#eeeeec" /><path d="M11 4.5l-8 8.5" fill="none" stroke="#eeeeec" stroke-width="2" /><circle cx="2.5" cy="14" r="1.3" fill="#eee"/></svg><svg style="left:13px;top:545px" width="16" height="16" viewBox="0 0 16 16"><path d="M5 6h10l-1.5 7.5h-6z" fill="#eeeeec" /><path d="M7 0h2v9h-2z" fill="#eeeeec" /><path d="M1.5 15V9.5l3-1" fill="none" stroke="#eeeeec" stroke-width="2.2" /></svg><svg style="left:13px;top:586px" width="16" height="16" viewBox="0 0 16 16"><path d="M0 10c3-1 6-3 8-7 1-2 4-3 6-1.5 1.5 1 1 3-0.5 3-1 0-1.5-1-2.5 0-1 1.5-1 4 1 5h3V15H0z" fill="#eeeeec" /></svg><svg style="left:13px;top:611px" width="16" height="16" viewBox="0 0 16 16"><path d="M9 7a2 2 0 0 1 4 0c2 1 2.5 2 2.5 4v3.5c0 1-0.5 1.5-1.5 1.5h-3c-1 0-1.5-0.5-1.5-1.5V10c0-1.5 0-2.5-0.5-3z" fill="#eeeeec" /><path d="M1 1h1v1h-1zM3 2h1v1h-1zM1 4h1v1h-1zM4 5h1v1h-1zM5 1h1v1h-1zM6 3h1v1h-1zM2 6.5h1v1h-1z" fill="#ccc" /></svg><svg style="left:13px;top:637px" width="16" height="16" viewBox="0 0 16 16"><path d="M9 0.5l6 4-5 6.5-6-4z" fill="#eeeeec" /><path d="M4 6.5l6 4-2 2.5-4-0.5-2-2.5z" fill="#eee" /><path d="M0 15h7v1.2h-7zM9 15h7v1.2h-7z" fill="#eeeeec" /></svg><svg style="left:13px;top:663px" width="16" height="16" viewBox="0 0 16 16"><path d="M5 0h5v4.5h-5zM0 11h5v5h-5zM10.5 11h5v5h-5z" fill="#eeeeec" /><path d="M5 3.5l-2.5 7.5M10 2h2l1.5 2v7" fill="none" stroke="#eeeeec" stroke-width="1" /></svg><svg style="left:13px;top:703px" width="16" height="16" viewBox="0 0 16 16"><circle cx="6.5" cy="6.5" r="5.5" fill="none" stroke="#eee" stroke-width="2"/><path d="M10.5 10.5l4.5 4.5" fill="none" stroke="#eeeeec" stroke-width="2.5" /></svg><svg style="left:16px;top:728px" width="10" height="16" viewBox="0 0 10 16"><path d="M1 0.8h6l2 2V15.2H1z" fill="none" stroke="#eeeeec" stroke-width="1.5" /><path d="M5 4h1v1h-1zM4 6h1v1h-1zM5 8h1v1h-1zM4 10h1v1h-1zM5 12h1v1h-1z" fill="#aaa" /></svg><div class="a" style="left:1402px;top:131px;width:450px;height:915px;background:#333333;"></div><div class="a" style="left:1402px;top:131px;width:18px;height:915px;background:#2f2f2f;"></div><div class="a" style="left:1420px;top:131px;width:1px;height:915px;background:#222222;"></div><div class="a" style="left:1403px;top:131px;width:17px;height:17px;background:#1a1a1a;border-radius:4px;"></div><div class="a" style="left:1405px;top:134px;width:12px;height:12px;background:#eeeeec;border-radius:2px;"></div><svg style="left:1405px;top:134px" width="12" height="12" viewBox="0 0 12 12"><path d="M5.2 2.5h1.8v7H5.2V4.5L3.8 5.3V3.9z" fill="#111" /></svg><div class="a" style="left:1408px;top:434px;width:6px;height:309px;background:#a8a8a8;border-radius:3px;"></div><div class="a" style="left:1421px;top:131px;width:386px;height:366px;background:#2d2d2d;"></div><div class="a" style="left:1421px;top:165px;width:386px;height:1px;background:#1f1f1f;"></div><div class="a" style="left:1806px;top:131px;width:1px;height:366px;background:#262626;"></div><svg style="left:1422px;top:141px" width="14" height="14" viewBox="0 0 14 14"><path d="M0 0h1.2v14H0zM3 1h8v2.5H3zM3 5.3h11v2.5H3zM3 9.7h7v2.5H3z" fill="#eeeeec" /></svg><div class="t" style="left:1438px;top:141.84px;font-size:12px;color:#eeeeee;font-weight:400;">Align and Distribute (Shift+Ctrl+A)</div><svg style="left:1746px;top:138px" width="12" height="12" viewBox="0 0 12 12"><rect x="0.5" y="0.5" width="11" height="11" rx="2" fill="none" stroke="#8c8c8c"/><path d="M3 6l5-3.2v6.4z" fill="#9a9a9a" /></svg><svg style="left:1782px;top:138px" width="12" height="12" viewBox="0 0 12 12"><rect x="0.5" y="0.5" width="11" height="11" rx="2" fill="none" stroke="#8c8c8c"/><path d="M3.2 3.2l5.6 5.6M8.8 3.2L3.2 8.8" fill="none" stroke="#9a9a9a" stroke-width="1.8" /></svg><div class="t" style="left:1425px;top:170.84px;font-size:12px;color:#f0f0f0;font-weight:700;">Align</div><svg style="left:1444px;top:194px" width="22" height="22" viewBox="0 0 22 22"><rect x="1" y="1" width="20" height="20" fill="none" stroke="#eeeeec" stroke-width="2" stroke-dasharray="2 2.2"/><path d="M6 6h10v10H6z" fill="#eeeeec" /></svg><div class="t" style="left:1578px;top:199.84px;font-size:12px;color:#e0e0e0;font-weight:400;">Relative to:</div><div class="a" style="left:1640px;top:189px;width:119px;height:33px;background:#333333;border:1px solid #1f1f1f;border-radius:5px;"></div><div class="t" style="left:1651.5px;top:199.84px;font-size:12px;color:#eeeeee;font-weight:400;">Page</div><svg style="left:1736px;top:203px" width="10" height="6" viewBox="0 0 10 6"><path d="M0 0h10l-5 5.5z" fill="#eeeeec" /></svg><svg style="left:1770px;top:194px" width="23" height="22" viewBox="0 0 23 22"><path d="M0 0h1.5v22H0zM21.5 0H23v22h-1.5zM4 2h13v4H4zM6 8h13v4H6zM4 14h13v4H4z" fill="#eeeeec" /><path d="M4 6h13v2H4" fill="#2d2d2d" /></svg><svg style="left:1549px;top:227px" width="24" height="24" viewBox="0 0 24 24"><path d="M17 0h1.4v24H17zM19.5 1h4v3.5h-4zM0 5h15.5v4.5H0zM5.5 11h10v3.5h-10zM2 16h13.5v4.5H2z" fill="#eeeeec" /></svg><svg style="left:1549px;top:261px" width="24" height="24" viewBox="0 0 24 24"><path d="M4 2h3.5v14H4zM9.5 6.5H12V16H9.5zM14.5 0H18v16h-3.5zM0 17.5h24v1.4H0zM19.5 20h4v4h-4z" fill="#eeeeec" /></svg><svg style="left:1594px;top:227px" width="24" height="24" viewBox="0 0 24 24"><path d="M0 0h1.4v24H0zM3 0h14v4.5H3zM3 6h10v3.5H3zM3 11h13.5v4H3z" fill="#eeeeec" /><path d="M4 20.5h10" fill="none" stroke="#eeeeec" stroke-width="1.6" /><path d="M3 20.5l3-2.5v5z" fill="#eeeeec" /></svg><svg style="left:1592px;top:261px" width="24" height="24" viewBox="0 0 24 24"><path d="M0 0h24v1.4H0zM8.5 3h4v17h-4zM14.5 3h3v10h-3zM19.5 3h3.5v16.5h-3.5z" fill="#eeeeec" /><path d="M3 18V6" fill="none" stroke="#eeeeec" stroke-width="1.6" /><path d="M3 3.5l-2.7 3.5h5.4z" fill="#eeeeec" /></svg><svg style="left:1637px;top:227px" width="24" height="24" viewBox="0 0 24 24"><path d="M11.3 0h1.4v24h-1.4zM3.5 0h6v4.5h-6zM14.5 0h7v4.5h-7zM6 6h3.5v3.5H6zM14.5 6h5v3.5h-5zM4 11h5.5v4H4zM14.5 11h6v4h-6z" fill="#eeeeec" /><path d="M0 20.5h8M16 20.5h8" fill="none" stroke="#eeeeec" stroke-width="1.5" /><path d="M10 20.5l-3-2.5v5zM14 20.5l3-2.5v5z" fill="#eeeeec" /></svg><svg style="left:1637px;top:261px" width="24" height="24" viewBox="0 0 24 24"><path d="M0 11.3h24v1.4H0zM9 3h4v7H9zM15 5.5h3v4.5h-3zM20 3.5h3.5V10H20zM9 14h4v7H9zM15 14h3v4.5h-3zM20 14h3.5v6.5H20z" fill="#eeeeec" /><path d="M3 1v7M3 16v8" fill="none" stroke="#eeeeec" stroke-width="1.5" /><path d="M3 9.5l-2.5-3h5zM3 14.5l-2.5 3h5z" fill="#eeeeec" /></svg><svg style="left:1682px;top:227px" width="24" height="24" viewBox="0 0 24 24"><path d="M18 0h1.4v24H18zM2 0h14.5v4.5H2zM5 6h11.5v3.5H5zM2 11h14.5v4H2z" fill="#eeeeec" /><path d="M4 20.5h10" fill="none" stroke="#eeeeec" stroke-width="1.6" /><path d="M16.5 20.5l-3-2.5v5z" fill="#eeeeec" /></svg><svg style="left:1681px;top:261px" width="24" height="24" viewBox="0 0 24 24"><path d="M0 22h24v1.4H0zM8 2h4.5v18H8zM14.5 7h3v13h-3zM19.5 4h4v16h-4z" fill="#eeeeec" /><path d="M3 4v12" fill="none" stroke="#eeeeec" stroke-width="1.6" /><path d="M3 19.5l-2.7-3.5h5.4z" fill="#eeeeec" /></svg><svg style="left:1724px;top:227px" width="24" height="24" viewBox="0 0 24 24"><path d="M4.5 0h1.4v24H4.5zM0 0h3.5v3.5H0zM7.5 4.5h15v4h-15zM7.5 10h9.5v4H7.5zM7.5 15.5h13.5v4H7.5z" fill="#eeeeec" /></svg><svg style="left:1725px;top:261px" width="24" height="24" viewBox="0 0 24 24"><path d="M0 4.5h22v1.4H0zM4.5 7H8v14H4.5zM10 7h3v7.5h-3zM15 7h3.5v17H15zM18.5 0h4v4h-4z" fill="#eeeeec" /></svg><svg style="left:1767px;top:227px" width="24" height="24" viewBox="0 0 24 24"><text x="8" y="9" font-family="Liberation Sans" font-weight="700" font-size="13" fill="#eeeeec">a</text><text x="4.5" y="19" font-family="Liberation Serif" font-style="italic" font-size="22" fill="#eeeeec">y</text><path d="M6 0.7h1.7v21H6z" fill="#eeeeec" /><path d="M4.6 21.5l2.25 3 2.25-3z" fill="#eeeeec" /></svg><svg style="left:1767px;top:261px" width="24" height="24" viewBox="0 0 24 24"><text x="2.5" y="15" font-family="Liberation Serif" font-style="italic" font-size="21" fill="#eeeeec">y</text><text x="13.3" y="15" font-family="Liberation Sans" font-weight="700" font-size="14" fill="#eeeeec">a</text><path d="M1.8 15h24v1.6h-24z" fill="#eeeeec" /></svg><div class="t" style="left:1425.5px;top:296.84px;font-size:12px;color:#f0f0f0;font-weight:700;">Distribute</div><svg style="left:1596px;top:318px" width="24" height="24" viewBox="0 0 24 24"><path d="M0 0h1.6v24H0zM0 9h6.5v15H0zM13.6 0h1.7v18h-1.7zM13.6 9h5.2v9h-5.2z" fill="#eeeeec" /><path d="M4.1 3.2H11.5" fill="none" stroke="#eeeeec" stroke-width="1.2" /><path d="M2.6 3.2l1.8 -1.8v3.6zM13 3.2l-1.8 -1.8v3.6z" fill="#eeeeec" /></svg><svg style="left:1593px;top:353px" width="24" height="24" viewBox="0 0 24 24"><path d="M0 1.5h24v1.6H0zM9.1 3.1h11v4.6h-11zM0 14.8h24v1.9H0zM9.1 16.7H24v4.9H9.1z" fill="#eeeeec" /><path d="M4.2 5.6V12.7" fill="none" stroke="#eeeeec" stroke-width="1.4" /><path d="M4.2 4.1l-2 2h4zM4.2 14.2l-2 -2h4z" fill="#eeeeec" /></svg><svg style="left:1640px;top:318px" width="24" height="24" viewBox="0 0 24 24"><path d="M0 9h7.1v15H0zM13 9h5v9h-5z" fill="#eeeeec" /><path d="M2.4 9h2.3v3.6H2.4zM14.4 9h2.3v3.6h-2.3z" fill="#2c2c2c" /><path d="M2.9 0h1.3v12.3H2.9zM14.9 0h1.3v12.3h-1.3z" fill="#eeeeec" /><path d="M6.5 4.1H12.8" fill="none" stroke="#eeeeec" stroke-width="1.2" /><path d="M5 4.1l1.8 -1.8v3.6zM14.3 4.1l-1.8 -1.8v3.6z" fill="#eeeeec" /></svg><svg style="left:1637px;top:353px" width="24" height="24" viewBox="0 0 24 24"><path d="M9.5 2.3h8.1v5.1H9.5zM9.5 13.2h14.3v7.1H9.5z" fill="#eeeeec" /><path d="M0 4h13.3v1.6H0zM0 16h13.3v1.6H0z" fill="#eeeeec" /><path d="M11.6 3.5h4.5v3h-4.5z" fill="#2c2c2c" /><path d="M11 4h2.3v1.6H11zM11 16h2.3v1.6H11z" fill="#eeeeec" /><path d="M4 7.2V13.5" fill="none" stroke="#eeeeec" stroke-width="1.4" /><path d="M4 5.7l-2 2h4zM4 15l-2 -2h4z" fill="#eeeeec" /></svg><svg style="left:1682px;top:318px" width="24" height="24" viewBox="0 0 24 24"><path d="M0 9h7v15H0zM5.5 0h1.3v9H5.5zM17.2 0h1.9v24h-1.9zM12.2 9h5v9h-5z" fill="#eeeeec" /><path d="M8.5 3.2H15.5" fill="none" stroke="#eeeeec" stroke-width="1.2" /><path d="M7 3.2l1.8 -1.8v3.6zM17 3.2l-1.8 -1.8v3.6z" fill="#eeeeec" /></svg><svg style="left:1681px;top:352px" width="24" height="24" viewBox="0 0 24 24"><path d="M9 1h8.8v3.5H9zM0 4.7h24v1.7H0zM9 12h15v5.5H9zM0 17.3h24v1.6H0z" fill="#eeeeec" /><path d="M3.7 8.2V14.600000000000001" fill="none" stroke="#eeeeec" stroke-width="1.4" /><path d="M3.7 6.7l-2 2h4zM3.7 16.1l-2 -2h4z" fill="#eeeeec" /></svg><svg style="left:1725px;top:318px" width="24" height="24" viewBox="0 0 24 24"><path d="M0 9h3.4v15H0zM2.8 0h1.2v24H2.8zM9.2 7.5h6.1V24H9.2zM9.8 0H11v9H9.8zM14 0h1.3v24H14zM20.1 0h1.6v24h-1.6zM20.1 9H24v10h-3.9z" fill="#eeeeec" /><path d="M5.5 2.1H8.3" fill="none" stroke="#eeeeec" stroke-width="0.8" /><path d="M4 2.1l1.1 -1.1v2.2zM9.8 2.1l-1.1 -1.1v2.2z" fill="#eeeeec" /><path d="M16.8 2.1H18.6" fill="none" stroke="#eeeeec" stroke-width="0.8" /><path d="M15.3 2.1l1.1 -1.1v2.2zM20.1 2.1l-1.1 -1.1v2.2z" fill="#eeeeec" /></svg><svg style="left:1725px;top:352px" width="24" height="24" viewBox="0 0 24 24"><path d="M9.2 0H19v2.6H9.2zM0 2.4h24v1.9H0zM7 9h17v5.8H7zM0 19.7h24v1.9H0zM9.2 21.6H24V24H9.2z" fill="#eeeeec" /><path d="M2 6.0V7.0" fill="none" stroke="#eeeeec" stroke-width="0.7" /><path d="M2 4.5l-1 1h2zM2 8.5l-1 -1h2z" fill="#eeeeec" /><path d="M2 16.5V18.0" fill="none" stroke="#eeeeec" stroke-width="0.7" /><path d="M2 15l-1 1h2zM2 19.5l-1 -1h2z" fill="#eeeeec" /></svg><svg style="left:1769px;top:318px" width="24" height="24" viewBox="0 0 24 24"><path d="M0 0h1.8v24H0zM12.5 0H14v24h-1.5z" fill="#eeeeec" /><path d="M3.6 2.4H10.8" fill="none" stroke="#eeeeec" stroke-width="1.2" /><path d="M2.1 2.4l1.8 -1.8v3.6zM12.3 2.4l-1.8 -1.8v3.6z" fill="#eeeeec" /><text x="1.5" y="17.5" font-family="Liberation Sans" font-weight="700" font-size="13" fill="#eeeeec">a</text><text x="10.5" y="19.5" font-family="Liberation Serif" font-style="italic" font-size="19" fill="#eeeeec">y</text></svg><svg style="left:1769px;top:352px" width="24" height="24" viewBox="0 0 24 24"><path d="M0 7.8h24v1.6H0zM0 18.8h24v1.5H0z" fill="#eeeeec" /><path d="M5 11.8V16.1" fill="none" stroke="#eeeeec" stroke-width="1.2" /><path d="M5 10.3l-1.6 1.6h3.2zM5 17.6l-1.6 -1.6h3.2z" fill="#eeeeec" /><text x="14.5" y="8.5" font-family="Liberation Sans" font-weight="700" font-size="13.5" fill="#eeeeec">a</text><text x="12" y="21.5" font-family="Liberation Serif" font-style="italic" font-size="19" fill="#eeeeec">y</text></svg><div class="t" style="left:1425.5px;top:387.84px;font-size:12px;color:#f0f0f0;font-weight:700;">Rearrange</div><svg style="left:1549px;top:410px" width="24" height="24" viewBox="0 0 24 24"><path d="M6.75 0.9L15.7 3 15 11.3 6.75 12.7 1.2 7.1Z M15 11.3L19.9 18.9 11.6 21" fill="none" stroke="#eeeeec" stroke-width="1.2" /><circle cx="6.75" cy="0.9" r="1.9" fill="#eeeeec"/><circle cx="15.7" cy="3" r="1.9" fill="#eeeeec"/><circle cx="15" cy="11.3" r="1.9" fill="#eeeeec"/><circle cx="6.75" cy="12.7" r="1.9" fill="#eeeeec"/><circle cx="1.2" cy="7.1" r="1.9" fill="#eeeeec"/><circle cx="19.9" cy="18.9" r="1.9" fill="#eeeeec"/><circle cx="11.6" cy="21" r="1.9" fill="#eeeeec"/></svg><svg style="left:1594px;top:409px" width="24" height="24" viewBox="0 0 24 24"><path d="M3.2 0.3h8.7v8.5H3.2zM13.3 10.2h8.6v8.6h-8.6z" fill="#eeeeec" /><path d="M12.9 4.7h3a1.8 1.8 0 0 1 1.8 1.8V7" fill="none" stroke="#eeeeec" stroke-width="1.2" /><path d="M15.7 6.8h4l-2 2.3z" fill="#eeeeec" /><path d="M12.9 15.7h-3a1.8 1.8 0 0 1-1.8-1.8V13" fill="none" stroke="#eeeeec" stroke-width="1.2" /><path d="M6.1 13.2h4l-2-2.3z" fill="#eeeeec" /><path d="M1.8 16.4l4.9 4.4-2.3 0.3 1.4 2.8-1 0.5-1.4-2.8-1.6 1.6z" fill="#eeeeec" /></svg><svg style="left:1638px;top:409px" width="24" height="24" viewBox="0 0 24 24"><path d="M3.2 0.3h8.7v8.5H3.2zM13.3 10.2h8.6v8.6h-8.6z" fill="#eeeeec" /><path d="M12.9 4.7h3a1.8 1.8 0 0 1 1.8 1.8V7" fill="none" stroke="#eeeeec" stroke-width="1.2" /><path d="M15.7 6.8h4l-2 2.3z" fill="#eeeeec" /><path d="M12.9 15.7h-3a1.8 1.8 0 0 1-1.8-1.8V13" fill="none" stroke="#eeeeec" stroke-width="1.2" /><path d="M6.1 13.2h4l-2-2.3z" fill="#eeeeec" /><path d="M1.5 23.5V17.5M4.2 17v6" fill="none" stroke="#eeeeec" stroke-width="1" /><path d="M1.5 16.5l-1.6 2h3.2zM4.2 24l-1.6-2h3.2z" fill="#eeeeec" /></svg><svg style="left:1682px;top:409px" width="24" height="24" viewBox="0 0 24 24"><path d="M3.2 0.3h8.7v8.5H3.2zM13.3 10.2h8.6v8.6h-8.6z" fill="#eeeeec" /><path d="M12.9 4.7h3a1.8 1.8 0 0 1 1.8 1.8V7" fill="none" stroke="#eeeeec" stroke-width="1.2" /><path d="M15.7 6.8h4l-2 2.3z" fill="#eeeeec" /><path d="M12.9 15.7h-3a1.8 1.8 0 0 1-1.8-1.8V13" fill="none" stroke="#eeeeec" stroke-width="1.2" /><path d="M6.1 13.2h4l-2-2.3z" fill="#eeeeec" /><circle cx="3.4" cy="19.5" r="3.9" fill="none" stroke="#bdbdbd" stroke-width="1" stroke-dasharray="1.5 1"/></svg><svg style="left:1726px;top:410px" width="24" height="24" viewBox="0 0 24 24"><path d="M1.2 1.6h5.5v3.2H1.2zM11.3 2.3H17v3.5h-5.7zM6.3 8.5h5.5v3.2H6.3zM15.4 10.3h5.5v3.5h-5.5zM1.2 14.5H7v3.4H1.2zM9.5 17.2H15v3.5H9.5z" fill="#eeeeec" /></svg><svg style="left:1769px;top:410px" width="24" height="24" viewBox="0 0 24 24"><path d="M1 9.2h6v5.3H1zM16.2 2h6v5.1h-6zM16.2 16.1h6V21h-6z" fill="#eeeeec" /><path d="M7 9.5L15.5 5.5M7 14L15.5 18" fill="none" stroke="#eeeeec" stroke-width="1.1" stroke-dasharray="3.5 1.5"/><path d="M19.2 8v7" fill="none" stroke="#eeeeec" stroke-width="1.4" stroke-dasharray="3 1.5"/></svg><div class="t" style="left:1425.5px;top:443.84px;font-size:12px;color:#f0f0f0;font-weight:700;">Remove overlaps</div><div class="a" style="left:1588px;top:461px;width:75px;height:33px;background:#2b2b2b;border:1px solid #1f1f1f;border-radius:5px"></div><div class="a" style="left:1629px;top:462px;width:1px;height:31px;background:#262626;"></div><div class="a" style="left:1646px;top:462px;width:1px;height:31px;background:#262626;"></div><svg style="left:1632px;top:471.5px" width="12" height="12"><path d="M1 6h10" stroke="#eeeeec" stroke-width="1.6"/></svg><svg style="left:1649px;top:471.5px" width="12" height="12"><path d="M1 6h10M6 1v10" stroke="#eeeeec" stroke-width="1.6"/></svg><div class="t" style="left:1591.5px;top:472.84px;font-size:12px;color:#eeeeee;font-weight:400;">0.0</div><div class="t" style="left:1573px;top:472.14px;font-size:12px;color:#c8c8c8;font-weight:400;">H:</div><div class="a" style="left:1680px;top:461px;width:75px;height:33px;background:#2b2b2b;border:1px solid #1f1f1f;border-radius:5px"></div><div class="a" style="left:1721px;top:462px;width:1px;height:31px;background:#262626;"></div><div class="a" style="left:1738px;top:462px;width:1px;height:31px;background:#262626;"></div><svg style="left:1724px;top:471.5px" width="12" height="12"><path d="M1 6h10" stroke="#eeeeec" stroke-width="1.6"/></svg><svg style="left:1741px;top:471.5px" width="12" height="12"><path d="M1 6h10M6 1v10" stroke="#eeeeec" stroke-width="1.6"/></svg><div class="t" style="left:1683.5px;top:472.84px;font-size:12px;color:#eeeeee;font-weight:400;">0.0</div><div class="t" style="left:1667px;top:472.14px;font-size:12px;color:#c8c8c8;font-weight:400;">V:</div><svg style="left:1770px;top:467px" width="24" height="22" viewBox="0 0 24 22"><path d="M0 0h5.1v4.7H0zM0 7.5h5.1v14.1H0zM9 0h5.3v21.6H9zM18 0h5.1v21.6H18z" fill="#eeeeec" /></svg><div class="a" style="left:1421px;top:497px;width:386px;height:36px;background:#333333;"></div><div class="a" style="left:1421px;top:498px;width:55px;height:33px;background:#1f1f1f;border-radius:0px;border-bottom-left-radius:6px"></div><div class="a" style="left:1475px;top:498px;width:54px;height:33px;background:#2d2d2d;border:1px solid #262626;border-radius:0px;border-bottom-right-radius:6px;border-top-right-radius:6px"></div><svg style="left:1432px;top:508px" width="13" height="13" viewBox="0 0 13 13"><path d="M0 0h1.2v13H0zM3 1h6v2.5H3zM3 5h9.5v2.5H3zM3 9.5h6v2.5H3z" fill="#eeeeec" /></svg><svg style="left:1452px;top:511px" width="11" height="8" viewBox="0 0 11 8"><path d="M1 6l4.5-4.5L10 6" fill="none" stroke="#eeeeec" stroke-width="1.8" /></svg><svg style="left:1485px;top:507px" width="15" height="15" viewBox="0 0 15 15"><path d="M3 0h12l-2.5 3.8H0zM3 5.5h12l-2.5 3.8H0zM3 11h12l-2.5 3.8H0z" fill="#111" /></svg><svg style="left:1506px;top:511px" width="11" height="8" viewBox="0 0 11 8"><path d="M1 6l4.5-4.5L10 6" fill="none" stroke="#eeeeec" stroke-width="1.8" /></svg><div class="a" style="left:1421px;top:533px;width:386px;height:513px;background:#303030;"></div><div class="a" style="left:1421px;top:532px;width:386px;height:1px;background:#262626;"></div><div class="a" style="left:1421px;top:568px;width:386px;height:1px;background:#1f1f1f;"></div><div class="a" style="left:1806px;top:533px;width:1px;height:513px;background:#262626;"></div><svg style="left:1421px;top:543px" width="16" height="16" viewBox="0 0 16 16"><path d="M0.7 15V0.7h12" fill="none" stroke="#eeeeec" stroke-width="1.2" /><path d="M15 0.5l0.8 0.8-7.5 8.5-1.6-1.6z" fill="#eeeeec" /><path d="M3.5 11.5c1.5-2 3-2.5 4-1.5s0.5 2.5-1.5 3.5C5 14 3 14.8 1.5 15.3c0.6-1.2 1-2.6 2-3.8z" fill="#eeeeec" /></svg><div class="t" style="left:1438px;top:544.84px;font-size:12px;color:#eeeeee;font-weight:400;">Fill and Stroke (Shift+Ctrl+F)</div><svg style="left:1746px;top:541px" width="12" height="12" viewBox="0 0 12 12"><rect x="0.5" y="0.5" width="11" height="11" rx="2" fill="none" stroke="#8c8c8c"/><path d="M3 6l5-3.2v6.4z" fill="#9a9a9a" /></svg><svg style="left:1782px;top:541px" width="12" height="12" viewBox="0 0 12 12"><rect x="0.5" y="0.5" width="11" height="11" rx="2" fill="none" stroke="#8c8c8c"/><path d="M3.2 3.2l5.6 5.6M8.8 3.2L3.2 8.8" fill="none" stroke="#9a9a9a" stroke-width="1.8" /></svg><div class="a" style="left:1425px;top:572px;width:378px;height:366px;background:#2c2c2c;border:1px solid #1e1e1e;border-radius:0px;"></div><div class="a" style="left:1426px;top:573px;width:376px;height:36px;background:#262626;"></div><div class="a" style="left:1426px;top:609px;width:376px;height:1px;background:#1e1e1e;"></div><div class="a" style="left:1501px;top:607px;width:113px;height:3px;background:#1f5aa8;"></div><div class="a" style="left:1446px;top:583px;width:16px;height:16px;background:#eeeeec;border-radius:1px;"></div><div class="t" style="left:1466.5px;top:585.34px;font-size:12px;color:#9a9a9a;font-weight:700;">Fill</div><div class="a" style="left:1513px;top:583px;width:16px;height:16px;background:transparent;border:1px solid #eeeeec;border-radius:1px;"></div><div class="t" style="left:1533px;top:585.34px;font-size:12px;color:#f2f2f2;font-weight:700;">Stroke paint</div><svg style="left:1634px;top:583px" width="16" height="16" viewBox="0 0 16 16"><path d="M0 3h12" fill="none" stroke="#eeeeec" stroke-width="1.3" /><path d="M11 0l4 3-4 3z" fill="#eeeeec" /><path d="M0 8h2v1.5H0zM5 8h2v1.5H5z" fill="#eeeeec" /><path d="M0 14h15" fill="none" stroke="#eeeeec" stroke-width="1.3" /></svg><div class="t" style="left:1654px;top:585.34px;font-size:12px;color:#a8a8a8;font-weight:700;">Stroke style</div><div class="a" style="left:1470px;top:618px;width:36px;height:34px;background:#1f1f1f;border-radius:6px;"></div><svg style="left:1447px;top:631px" width="9" height="9" viewBox="0 0 9 9"><path d="M1 1l7 7M8 1L1 8" fill="none" stroke="#eeeeec" stroke-width="1.7" /></svg><div class="a" style="left:1480px;top:627px;width:16px;height:16px;background:#eeeeec;border-radius:0px;"></div><div class="a" style="left:1516px;top:627px;width:16px;height:16px;background:linear-gradient(90deg,#eee 0,#eee 25%,#888 30%,#bbb 100%)"></div><div class="a" style="left:1553px;top:627px;width:15px;height:15px;background:radial-gradient(circle,#fff 15%,#999 30%,#555 100%)"></div><svg style="left:1588px;top:627px" width="16" height="16" viewBox="0 0 16 16"><rect x="0.5" y="0.5" width="15" height="15" fill="#9a9a9a" stroke="#eee"/><path d="M8 1h7v7H8zM1 8h7v7H1z" fill="#222" /><path d="M1 1h7v7H1z" fill="#7a7a7a" /></svg><svg style="left:1624px;top:627px" width="16" height="16" viewBox="0 0 16 16"><path d="M0 0h16v16H0z" fill="#eee" /><path d="M4 0l4 4-4 4-4-4zM12 0l4 4-4 4-4-4zM4 8l4 4-4 4-4-4zM12 8l4 4-4 4-4-4z" fill="#2c2c2c" /><path d="M8 4l4 4-4 4-4-4z" fill="#eee" /></svg><svg style="left:1660px;top:627px" width="16" height="16" viewBox="0 0 16 16"><rect x="0.5" y="0.5" width="15" height="15" fill="#eee" stroke="#888" stroke-width="1.5"/></svg><svg style="left:1697px;top:627px" width="14" height="16" viewBox="0 0 14 16"><text x="1" y="15" font-family="Liberation Sans" font-weight="700" font-size="16" fill="#eeeeec">?</text></svg><div class="t" style="left:1434.5px;top:661.84px;font-size:12px;color:#f0f0f0;font-weight:700;">Flat color</div><div class="a" style="left:1435px;top:680px;width:57px;height:33px;background:#333333;border:1px solid #1f1f1f;border-radius:5px;"></div><div class="t" style="left:1435px;top:691.84px;width:57px;text-align:center;font-size:12px;color:#eeeeee">RGB</div><div class="a" style="left:1495px;top:680px;width:59px;height:33px;background:#232323;border:1px solid #1f1f1f;border-radius:5px;"></div><div class="t" style="left:1495px;top:691.84px;width:59px;text-align:center;font-size:12px;color:#eeeeee">HSL</div><div class="a" style="left:1557px;top:680px;width:57px;height:33px;background:#333333;border:1px solid #1f1f1f;border-radius:5px;"></div><div class="t" style="left:1557px;top:691.84px;width:57px;text-align:center;font-size:12px;color:#eeeeee">HSV</div><div class="a" style="left:1616px;top:680px;width:57px;height:33px;background:#333333;border:1px solid #1f1f1f;border-radius:5px;"></div><div class="t" style="left:1616px;top:691.84px;width:57px;text-align:center;font-size:12px;color:#eeeeee">CMYK</div><div class="a" style="left:1676px;top:680px;width:57px;height:33px;background:#333333;border:1px solid #1f1f1f;border-radius:5px;"></div><div class="t" style="left:1676px;top:691.84px;width:57px;text-align:center;font-size:12px;color:#eeeeee">Wheel</div><div class="a" style="left:1736px;top:680px;width:58px;height:33px;background:#333333;border:1px solid #1f1f1f;border-radius:5px;"></div><div class="t" style="left:1736px;top:691.84px;width:58px;text-align:center;font-size:12px;color:#eeeeee">CMS</div><div class="a" style="left:1462px;top:717px;width:248px;height:34px;background:linear-gradient(90deg,#f00 0%,#ff0 16.7%,#0f0 33.3%,#0ff 50%,#00f 66.7%,#f0f 83.3%,#f00 100%)"></div><div class="t" style="left:1442px;top:729.34px;font-size:12px;color:#e0e0e0;font-weight:400;">H:</div><svg style="left:1683px;top:716px" width="10" height="35" viewBox="0 0 10 35"><path d="M0.5 1h9l-4.5 5z" fill="#e8e8e8" /><path d="M1.8 1h6.4l-3.2 3.6z" fill="#111" /><path d="M0.5 35h9l-4.5-5z" fill="#e8e8e8" /><path d="M1.8 35h6.4l-3.2-3.6z" fill="#111" /></svg><div class="a" style="left:1718px;top:718px;width:68px;height:33px;background:#2b2b2b;border:1px solid #1f1f1f;border-radius:5px"></div><div class="a" style="left:1752px;top:719px;width:1px;height:31px;background:#262626;"></div><div class="a" style="left:1769px;top:719px;width:1px;height:31px;background:#262626;"></div><svg style="left:1755px;top:728.5px" width="12" height="12"><path d="M1 6h10" stroke="#eeeeec" stroke-width="1.6"/></svg><svg style="left:1772px;top:728.5px" width="12" height="12"><path d="M1 6h10M6 1v10" stroke="#eeeeec" stroke-width="1.6"/></svg><div class="t" style="left:1721.5px;top:729.34px;font-size:12px;color:#eeeeee;font-weight:400;">329</div><div class="a" style="left:1462px;top:753px;width:248px;height:34px;background:linear-gradient(90deg,#b0b0b0,#ea74b0 73%,#ff5cb0)"></div><div class="t" style="left:1442px;top:765.34px;font-size:12px;color:#e0e0e0;font-weight:400;">S:</div><svg style="left:1639px;top:752px" width="10" height="35" viewBox="0 0 10 35"><path d="M0.5 1h9l-4.5 5z" fill="#e8e8e8" /><path d="M1.8 1h6.4l-3.2 3.6z" fill="#111" /><path d="M0.5 35h9l-4.5-5z" fill="#e8e8e8" /><path d="M1.8 35h6.4l-3.2-3.6z" fill="#111" /></svg><div class="a" style="left:1718px;top:754px;width:68px;height:33px;background:#2b2b2b;border:1px solid #1f1f1f;border-radius:5px"></div><div class="a" style="left:1752px;top:755px;width:1px;height:31px;background:#262626;"></div><div class="a" style="left:1769px;top:755px;width:1px;height:31px;background:#262626;"></div><svg style="left:1755px;top:764.5px" width="12" height="12"><path d="M1 6h10" stroke="#eeeeec" stroke-width="1.6"/></svg><svg style="left:1772px;top:764.5px" width="12" height="12"><path d="M1 6h10M6 1v10" stroke="#eeeeec" stroke-width="1.6"/></svg><div class="t" style="left:1721.5px;top:765.34px;font-size:12px;color:#eeeeee;font-weight:400;">74</div><div class="a" style="left:1462px;top:789px;width:248px;height:34px;background:linear-gradient(90deg,#000,#d41f82 50%,#ea74b0 69%,#fff)"></div><div class="t" style="left:1442px;top:801.34px;font-size:12px;color:#e0e0e0;font-weight:400;">L:</div><svg style="left:1627px;top:788px" width="10" height="35" viewBox="0 0 10 35"><path d="M0.5 1h9l-4.5 5z" fill="#e8e8e8" /><path d="M1.8 1h6.4l-3.2 3.6z" fill="#111" /><path d="M0.5 35h9l-4.5-5z" fill="#e8e8e8" /><path d="M1.8 35h6.4l-3.2-3.6z" fill="#111" /></svg><div class="a" style="left:1718px;top:790px;width:68px;height:33px;background:#2b2b2b;border:1px solid #1f1f1f;border-radius:5px"></div><div class="a" style="left:1752px;top:791px;width:1px;height:31px;background:#262626;"></div><div class="a" style="left:1769px;top:791px;width:1px;height:31px;background:#262626;"></div><svg style="left:1755px;top:800.5px" width="12" height="12"><path d="M1 6h10" stroke="#eeeeec" stroke-width="1.6"/></svg><svg style="left:1772px;top:800.5px" width="12" height="12"><path d="M1 6h10M6 1v10" stroke="#eeeeec" stroke-width="1.6"/></svg><div class="t" style="left:1721.5px;top:801.34px;font-size:12px;color:#eeeeee;font-weight:400;">69</div><div class="a" style="left:1462px;top:825px;width:248px;height:34px;background-color:#aaa;background-image:linear-gradient(45deg,#666 25%,transparent 25%,transparent 75%,#666 75%),linear-gradient(45deg,#666 25%,transparent 25%,transparent 75%,#666 75%);background-size:16px 16px;background-position:0 0,8px 8px"></div><div class="a" style="left:1462px;top:825px;width:248px;height:34px;background:linear-gradient(90deg,rgba(234,116,176,0),rgba(234,116,176,1))"></div><div class="t" style="left:1442px;top:837.34px;font-size:12px;color:#e0e0e0;font-weight:400;">A:</div><div class="a" style="left:1718px;top:826px;width:68px;height:33px;background:#2b2b2b;border:1px solid #1f1f1f;border-radius:5px"></div><div class="a" style="left:1752px;top:827px;width:1px;height:31px;background:#262626;"></div><div class="a" style="left:1769px;top:827px;width:1px;height:31px;background:#262626;"></div><svg style="left:1755px;top:836.5px" width="12" height="12"><path d="M1 6h10" stroke="#eeeeec" stroke-width="1.6"/></svg><svg style="left:1772px;top:836.5px" width="12" height="12"><path d="M1 6h10M6 1v10" stroke="#777" stroke-width="1.6"/></svg><div class="t" style="left:1721.5px;top:837.34px;font-size:12px;color:#eeeeee;font-weight:400;">100</div><svg style="left:1705px;top:824px" width="10" height="6" viewBox="0 0 10 6"><path d="M0 0h10l-5 5z" fill="#111" /></svg><svg style="left:1705px;top:854px" width="10" height="6" viewBox="0 0 10 6"><path d="M0 6h10l-5-5z" fill="#111" /></svg><svg style="left:1435px;top:907px" width="16" height="16" viewBox="0 0 16 16"><circle cx="8" cy="4" r="3.3" fill="none" stroke="#8a8a8a" stroke-width="1.1"/><circle cx="4.2" cy="11" r="3.3" fill="none" stroke="#8a8a8a" stroke-width="1.1"/><circle cx="11.8" cy="11" r="3.3" fill="none" stroke="#8a8a8a" stroke-width="1.1"/><circle cx="4.2" cy="11" r="1.5" fill="#8a8a8a"/><circle cx="11.8" cy="11" r="1.5" fill="#8a8a8a"/></svg><svg style="left:1456px;top:907px" width="16" height="16" viewBox="0 0 16 16"><circle cx="8" cy="8" r="7.2" fill="none" stroke="#777" stroke-width="1.1"/><circle cx="8" cy="8" r="2.8" fill="none" stroke="#777" stroke-width="1.1"/></svg><svg style="left:1487px;top:906px" width="14" height="17" viewBox="0 0 14 17"><path d="M9.5 1a2.2 2.2 0 0 1 3.3 3l-1.8 2.3-3-2.2z" fill="#eeeeec" /><path d="M9 5L3 13" fill="none" stroke="#eeeeec" stroke-width="2.2" /><circle cx="2.3" cy="14.3" r="1.5" fill="#eee"/></svg><div class="t" style="left:1692px;top:908.84px;font-size:12px;color:#e0e0e0;font-weight:400;letter-spacing:-0.4px">RGBA:</div><div class="a" style="left:1728px;top:899px;width:66px;height:33px;background:#2c2c2c;border:1px solid #1f1f1f;border-radius:5px;"></div><div class="t" style="left:1737.5px;top:908.84px;font-size:12px;color:#eeeeee;font-weight:400;">ea74b0ff</div><div class="t" style="left:1609px;top:956.34px;font-size:12px;color:#e0e0e0;font-weight:400;">Blend mode:</div><div class="a" style="left:1686px;top:946px;width:107px;height:33px;background:#333333;border:1px solid #1f1f1f;border-radius:5px;"></div><div class="t" style="left:1698.5px;top:956.34px;font-size:12px;color:#eeeeee;font-weight:400;">Normal</div><svg style="left:1770px;top:960px" width="10" height="6" viewBox="0 0 10 6"><path d="M0 0h10l-5 5.5z" fill="#eeeeec" /></svg><div class="a" style="left:1425px;top:988px;width:378px;height:1px;background:#262626;"></div><div class="a" style="left:1425px;top:996px;width:310px;height:32px;background:#262626;border:1px solid #1c1c1c;border-radius:4px;"></div><div class="t" style="left:1430px;top:1007.34px;font-size:12px;color:#eeeeee;font-weight:400;">Blur (%)</div><div class="a" style="left:1734px;top:996px;width:69px;height:32px;background:#2b2b2b;"></div><div class="t" style="left:1737.5px;top:1007.34px;font-size:12px;color:#eeeeee;font-weight:400;">0.0</div><svg style="left:1772px;top:1006px" width="11" height="12" viewBox="0 0 11 12"><path d="M0 6h11" fill="none" stroke="#666" stroke-width="1.6" /></svg><svg style="left:1789px;top:1006px" width="11" height="12" viewBox="0 0 11 12"><path d="M0 6h11M5.5 0.5v11" fill="none" stroke="#eeeeec" stroke-width="1.6" /></svg><div class="a" style="left:1425px;top:1029px;width:310px;height:17px;background:#1b55a0;border-radius:4px 4px 0 0;overflow:hidden"><div class="t" style="left:5px;top:10px;font-size:12px;color:#eee">Opacity (%)</div></div><div class="a" style="left:1734px;top:1029px;width:69px;height:17px;overflow:hidden"><div class="t" style="left:3.5px;top:10px;font-size:12px;color:#eee">100.0</div></div><svg style="left:1772px;top:1040px" width="11" height="3" viewBox="0 0 11 3"><path d="M0 1h11" fill="none" stroke="#eeeeec" stroke-width="1.6" /></svg><svg style="left:1789px;top:1039px" width="11" height="8" viewBox="0 0 11 8"><path d="M0 2h11M5.5 -3.5v8" fill="none" stroke="#666" stroke-width="1.6" /></svg><div class="a" style="left:1807px;top:131px;width:45px;height:915px;background:#353535;"></div><div class="a" style="left:1812px;top:135px;width:36px;height:33px;background:#212121;border-radius:6px;"></div><svg style="left:1820px;top:143px" width="18" height="18" viewBox="0 0 18 18"><path d="M8 2.5H10A6.5 6.5 0 0 1 10 15.5H8" fill="none" stroke="#eeeeec" stroke-width="3" /><circle cx="5.4" cy="2.5" r="1.6" fill="#eee"/><circle cx="5.4" cy="15.3" r="1.6" fill="#eee"/><path d="M5.6 6.8C4 6.3 2.8 7.5 4.3 9S5.6 11.6 3.2 11.4" fill="none" stroke="#eeeeec" stroke-width="1.5" /></svg><div class="a" style="left:1812px;top:176px;width:36px;height:1px;background:#3c3c3c;"></div><div class="a" style="left:1812px;top:184px;width:36px;height:33px;background:#212121;border-radius:6px;"></div><svg style="left:1820px;top:192px" width="18" height="18" viewBox="0 0 18 18"><path d="M8 2.5H10A6.5 6.5 0 0 1 10 15.5H8" fill="none" stroke="#eeeeec" stroke-width="3" /><circle cx="5.4" cy="2.5" r="1.6" fill="#eee"/><circle cx="5.4" cy="15.3" r="1.6" fill="#eee"/><path d="M5.6 6.8C4 6.3 2.8 7.5 4.3 9S5.6 11.6 3.2 11.4" fill="none" stroke="#eeeeec" stroke-width="1.5" /></svg><div class="a" style="left:1812px;top:219px;width:36px;height:33px;background:#212121;border-radius:6px;"></div><svg style="left:1820px;top:227px" width="18" height="18" viewBox="0 0 18 18"><path d="M8 1h10.2v1.6H8zM1.8 1h1.6v2H1.8zM1.8 4.5h1.6V16H1.8z" fill="#eeeeec" /><path d="M11.5 7.4L14.1 4.3 16.8 7.4z" fill="#eeeeec" /><path d="M5.4 12.5L8.8 9.5V15.5z" fill="#eeeeec" /></svg><div class="a" style="left:1812px;top:254px;width:36px;height:33px;background:#212121;border-radius:6px;"></div><svg style="left:1820px;top:262px" width="18" height="18" viewBox="0 0 18 18"><path d="M1.8 13.3h2.8v2H1.8zM6 13.3h2.8v2H6zM10.2 13.3h2.3v2h-2.3zM14.8 0h2v2.8h-2zM14.8 4.2h2V7h-2zM14.8 8.4h2v2.8h-2z" fill="#eeeeec" /><path d="M6 11.3L14.2 4.6V11.3z" fill="#eeeeec" /><path d="M15.8 12.4l1.8 1.8-1.8 1.8-1.8-1.8z" fill="#eeeeec" /></svg><div class="a" style="left:1812px;top:289px;width:36px;height:33px;background:#212121;border-radius:6px;"></div><svg style="left:1820px;top:297px" width="18" height="18" viewBox="0 0 18 18"><path d="M9.6 4.699999999999999V1.4H12.899999999999999M14.099999999999998 1.4H17.4V4.699999999999999M17.4 12.0V15.3H14.099999999999998M12.899999999999999 15.3H9.6V12.0" fill="none" stroke="#eee" stroke-width="1.6" stroke-linecap="square"/><path d="M12.0 1.4h3M12.0 15.3h3M9.6 6.85v3M17.4 6.85v3" fill="none" stroke="#eee" stroke-width="1.6" /><path d="M3.4 3v10.5" fill="none" stroke="#eeeeec" stroke-width="1.6" /><path d="M3.4 0.4l2.6 2.8H0.8zM3.4 16.3l2.6-2.8H0.8z" fill="#eeeeec" /><path d="M4.5 8.7h7" fill="none" stroke="#eeeeec" stroke-width="1.6" /><path d="M14.8 8.7l-3.5-2.6v5.2z" fill="#eeeeec" /></svg><div class="a" style="left:1812px;top:324px;width:36px;height:33px;background:#212121;border-radius:6px;"></div><svg style="left:1820px;top:332px" width="18" height="18" viewBox="0 0 18 18"><path d="M2.6 4.4V1.1H5.9M14.099999999999998 1.1H17.4V4.4M17.4 11.7V15H14.099999999999998M5.9 15H2.6V11.7" fill="none" stroke="#eee" stroke-width="1.6" stroke-linecap="square"/><path d="M8.5 1.1h3M8.5 15h3M2.6 6.550000000000001v3M17.4 6.550000000000001v3" fill="none" stroke="#eee" stroke-width="1.6" /><path d="M10 3.5v8.5M5.8 7.7h8.4" fill="none" stroke="#eeeeec" stroke-width="1.8" /></svg><div class="a" style="left:1812px;top:366px;width:36px;height:1px;background:#3c3c3c;"></div><div class="a" style="left:1812px;top:373px;width:36px;height:33px;background:#212121;border-radius:6px;"></div><svg style="left:1820px;top:381px" width="18" height="18" viewBox="0 0 18 18"><path d="M8 2.5H10A6.5 6.5 0 0 1 10 15.5H8" fill="none" stroke="#eeeeec" stroke-width="3" /><circle cx="5.4" cy="2.5" r="1.6" fill="#eee"/><circle cx="5.4" cy="15.3" r="1.6" fill="#eee"/><path d="M5.6 6.8C4 6.3 2.8 7.5 4.3 9S5.6 11.6 3.2 11.4" fill="none" stroke="#eeeeec" stroke-width="1.5" /></svg><div class="a" style="left:1812px;top:408px;width:36px;height:33px;background:#212121;border-radius:6px;"></div><svg style="left:1820px;top:416px" width="18" height="18" viewBox="0 0 18 18"><path d="M2 17V15A8 8 0 0 1 18 15V17" fill="none" stroke="#eeeeec" stroke-width="1.4" /><path d="M8.3 4.5h3.4v3.3H8.3z" fill="#bbb" /><path d="M4.2 5.8H8.3M11.7 5.8h4.1" fill="none" stroke="#bbb" stroke-width="0.9" /><circle cx="4.2" cy="5.8" r="1.2" fill="#bbb"/><circle cx="15.8" cy="5.8" r="1.2" fill="#bbb"/></svg><div class="a" style="left:1812px;top:443px;width:36px;height:33px;background:#212121;border-radius:6px;"></div><svg style="left:1820px;top:451px" width="18" height="18" viewBox="0 0 18 18"><path d="M2.5 16.5L17.5 2.3M1.7 9.5L17.5 8.5" fill="none" stroke="#eeeeec" stroke-width="1.3" /><circle cx="10" cy="9" r="2.8" fill="#eee"/></svg><div class="a" style="left:1812px;top:478px;width:36px;height:33px;background:#212121;border-radius:6px;"></div><svg style="left:1820px;top:486px" width="18" height="18" viewBox="0 0 18 18"><path d="M3 1Q12 2.5 13 9Q13 12 10.5 13.5" fill="none" stroke="#eeeeec" stroke-width="1.3" /><path d="M12.5 13Q15.5 12 15.5 9" fill="none" stroke="#eeeeec" stroke-width="1.1" /><path d="M10 11.2l2.6 2.6-2.6 2.6-2.6-2.6z" fill="#eeeeec" /></svg><div class="a" style="left:1812px;top:513px;width:36px;height:33px;background:#212121;border-radius:6px;"></div><svg style="left:1820px;top:521px" width="18" height="18" viewBox="0 0 18 18"><path d="M2 16.5V14.5A8 8 0 0 1 18 14.5V16.5" fill="none" stroke="#eeeeec" stroke-width="1.4" /><circle cx="10" cy="6.5" r="2.2" fill="#eee"/></svg><div class="a" style="left:1812px;top:548px;width:36px;height:33px;background:#212121;border-radius:6px;"></div><svg style="left:1820px;top:556px" width="18" height="18" viewBox="0 0 18 18"><path d="M4.7 2.5v12" fill="none" stroke="#eeeeec" stroke-width="1.6" /><path d="M4.7 0l3 3h-6zM4.7 17l3-3h-6zM6.5 6l4.5 2.8-4.5 2.8z" fill="#eeeeec" /><path d="M15.3 0.5v16" fill="none" stroke="#eeeeec" stroke-width="1.3" /><circle cx="15.3" cy="8.8" r="2.5" fill="#eee"/></svg><div class="a" style="left:1812px;top:590px;width:36px;height:1px;background:#3c3c3c;"></div><div class="a" style="left:1812px;top:597px;width:36px;height:33px;background:#212121;border-radius:6px;"></div><svg style="left:1820px;top:605px" width="18" height="18" viewBox="0 0 18 18"><path d="M8 2.5H10A6.5 6.5 0 0 1 10 15.5H8" fill="none" stroke="#eeeeec" stroke-width="3" /><circle cx="5.4" cy="2.5" r="1.6" fill="#eee"/><circle cx="5.4" cy="15.3" r="1.6" fill="#eee"/><path d="M5.6 6.8C4 6.3 2.8 7.5 4.3 9S5.6 11.6 3.2 11.4" fill="none" stroke="#eeeeec" stroke-width="1.5" /></svg><div class="a" style="left:1812px;top:632px;width:36px;height:33px;background:#212121;border-radius:6px;"></div><svg style="left:1820px;top:640px" width="18" height="18" viewBox="0 0 18 18"><path d="M3 1h5v5H3zM10.5 1h5v5h-5zM3 8.5h5v5H3zM10.5 8.5h5v5h-5z" fill="#eeeeec" /><path d="M9.25 -0.5V15M1.5 7.25H17" fill="none" stroke="#eeeeec" stroke-width="1.1" /></svg><div class="a" style="left:1812px;top:667px;width:36px;height:33px;background:#212121;border-radius:6px;"></div><svg style="left:1820px;top:675px" width="18" height="18" viewBox="0 0 18 18"><path d="M6 6A3.8 3.8 0 0 1 13 4.5" fill="none" stroke="#eeeeec" stroke-width="1.6" /><path d="M3.5 3.5l4.5 0.3-2.6 3.7z" fill="#eeeeec" /><path d="M5 9h4v3H5zM10.5 9h4v3h-4zM5 13.5h4v3H5zM10.5 13.5h4v3h-4z" fill="#eeeeec" /><path d="M9.75 7.5V18M3.5 12.75h12.5" fill="none" stroke="#eeeeec" stroke-width="0.9" /></svg><svg style="left:1820px;top:710px" width="18" height="18" viewBox="0 0 18 18"><path d="M8.5 0.5h3l5 13h-2.8l-1.1-3H8.4l-1.1 3H4.5zM9.2 8.2h3.2L10.8 3.6z" fill="#eeeeec" /><path d="M5 15.3h13" fill="none" stroke="#eeeeec" stroke-width="1.3" /><path d="M2.3 15.3l2-2 2 2-2 2z" fill="#eeeeec" /></svg><div class="a" style="left:1812px;top:743px;width:36px;height:1px;background:#3c3c3c;"></div><div class="a" style="left:1812px;top:751.5px;width:36px;height:33px;background:#212121;border-radius:6px;"></div><svg style="left:1820px;top:759.5px" width="18" height="18" viewBox="0 0 18 18"><rect x="4.8" y="1.8" width="10.8" height="13" fill="none" stroke="#eee" stroke-width="1.6"/></svg><div class="a" style="left:1812px;top:786.5px;width:36px;height:33px;background:#212121;border-radius:6px;"></div><svg style="left:1820px;top:794.5px" width="18" height="18" viewBox="0 0 18 18"><path d="M2 0h16v16H2z" fill="#eeeeec" /><path d="M4.3 0v16M6.6 0v16M8.9 0v16M11.2 0v16M13.5 0v16M15.8 0v16M2 2.3h16M2 4.6h16M2 6.9h16M2 9.2h16M2 11.5h16M2 13.8h16" fill="none" stroke="#212121" stroke-width="0.8" /></svg><div class="a" style="left:1812px;top:821.5px;width:36px;height:33px;background:#212121;border-radius:6px;"></div><svg style="left:1820px;top:829.5px" width="18" height="18" viewBox="0 0 18 18"><path d="M9.6 -3.5V15.5M3 12h14.5" fill="none" stroke="#eeeeec" stroke-width="1.4" /></svg><div class="a" style="left:0px;top:1046px;width:1852px;height:34px;background:#303030;"></div><div class="a" style="left:0px;top:1045px;width:1816px;height:23px;background:#1c1c1c;"></div><svg style="left:0;top:1046px" width="19" height="21"><rect width="19" height="21" fill="#fff"/><path d="M1 1L18 20M18 1L1 20" stroke="#8b0000" stroke-width="1.6"/></svg><div class="a" style="left:19px;top:1046px;width:19px;height:21px;background:#000000"></div><div class="a" style="left:38px;top:1046px;width:19px;height:21px;background:#1a1a1a"></div><div class="a" style="left:57px;top:1046px;width:19px;height:21px;background:#333333"></div><div class="a" style="left:76px;top:1046px;width:19px;height:21px;background:#4d4d4d"></div><div class="a" style="left:95px;top:1046px;width:19px;height:21px;background:#666666"></div><div class="a" style="left:114px;top:1046px;width:19px;height:21px;background:#808080"></div><div class="a" style="left:133px;top:1046px;width:19px;height:21px;background:#999999"></div><div class="a" style="left:152px;top:1046px;width:19px;height:21px;background:#b3b3b3"></div><div class="a" style="left:171px;top:1046px;width:19px;height:21px;background:#cccccc"></div><div class="a" style="left:190px;top:1046px;width:19px;height:21px;background:#e6e6e6"></div><div class="a" style="left:209px;top:1046px;width:19px;height:21px;background:#ececec"></div><div class="a" style="left:228px;top:1046px;width:19px;height:21px;background:#f2f2f2"></div><div class="a" style="left:247px;top:1046px;width:19px;height:21px;background:#f9f9f9"></div><div class="a" style="left:266px;top:1046px;width:19px;height:21px;background:#ffffff"></div><div class="a" style="left:285px;top:1046px;width:19px;height:21px;background:#800000"></div><div class="a" style="left:304px;top:1046px;width:19px;height:21px;background:#ff0000"></div><div class="a" style="left:323px;top:1046px;width:19px;height:21px;background:#808000"></div><div class="a" style="left:342px;top:1046px;width:19px;height:21px;background:#ffff00"></div><div class="a" style="left:361px;top:1046px;width:19px;height:21px;background:#008000"></div><div class="a" style="left:380px;top:1046px;width:19px;height:21px;background:#00ff00"></div><div class="a" style="left:399px;top:1046px;width:19px;height:21px;background:#008080"></div><div class="a" style="left:418px;top:1046px;width:19px;height:21px;background:#00ffff"></div><div class="a" style="left:437px;top:1046px;width:19px;height:21px;background:#000080"></div><div class="a" style="left:456px;top:1046px;width:19px;height:21px;background:#0000ff"></div><div class="a" style="left:475px;top:1046px;width:19px;height:21px;background:#800080"></div><div class="a" style="left:494px;top:1046px;width:19px;height:21px;background:#ff00ff"></div><div class="a" style="left:513px;top:1046px;width:19px;height:21px;background:#2b0000"></div><div class="a" style="left:532px;top:1046px;width:19px;height:21px;background:#550000"></div><div class="a" style="left:551px;top:1046px;width:19px;height:21px;background:#800000"></div><div class="a" style="left:570px;top:1046px;width:19px;height:21px;background:#aa0000"></div><div class="a" style="left:589px;top:1046px;width:19px;height:21px;background:#d40000"></div><div class="a" style="left:608px;top:1046px;width:19px;height:21px;background:#ff0000"></div><div class="a" style="left:627px;top:1046px;width:19px;height:21px;background:#ff2a2a"></div><div class="a" style="left:646px;top:1046px;width:19px;height:21px;background:#ff5555"></div><div class="a" style="left:665px;top:1046px;width:19px;height:21px;background:#ff8080"></div><div class="a" style="left:684px;top:1046px;width:19px;height:21px;background:#ffaaaa"></div><div class="a" style="left:703px;top:1046px;width:19px;height:21px;background:#ffd5d5"></div><div class="a" style="left:722px;top:1046px;width:19px;height:21px;background:#280b0b"></div><div class="a" style="left:741px;top:1046px;width:19px;height:21px;background:#501616"></div><div class="a" style="left:760px;top:1046px;width:19px;height:21px;background:#782121"></div><div class="a" style="left:779px;top:1046px;width:19px;height:21px;background:#a02c2c"></div><div class="a" style="left:798px;top:1046px;width:19px;height:21px;background:#c83737"></div><div class="a" style="left:817px;top:1046px;width:19px;height:21px;background:#d35f5f"></div><div class="a" style="left:836px;top:1046px;width:19px;height:21px;background:#de8787"></div><div class="a" style="left:855px;top:1046px;width:19px;height:21px;background:#e9afaf"></div><div class="a" style="left:874px;top:1046px;width:19px;height:21px;background:#f4d7d7"></div><div class="a" style="left:893px;top:1046px;width:19px;height:21px;background:#241c1c"></div><div class="a" style="left:912px;top:1046px;width:19px;height:21px;background:#483737"></div><div class="a" style="left:931px;top:1046px;width:19px;height:21px;background:#6c5353"></div><div class="a" style="left:950px;top:1046px;width:19px;height:21px;background:#916f6f"></div><div class="a" style="left:969px;top:1046px;width:19px;height:21px;background:#ac9393"></div><div class="a" style="left:988px;top:1046px;width:19px;height:21px;background:#c8b7b7"></div><div class="a" style="left:1007px;top:1046px;width:19px;height:21px;background:#e3dbdb"></div><div class="a" style="left:1026px;top:1046px;width:19px;height:21px;background:#2b1100"></div><div class="a" style="left:1045px;top:1046px;width:19px;height:21px;background:#552200"></div><div class="a" style="left:1064px;top:1046px;width:19px;height:21px;background:#803300"></div><div class="a" style="left:1083px;top:1046px;width:19px;height:21px;background:#aa4400"></div><div class="a" style="left:1102px;top:1046px;width:19px;height:21px;background:#d45500"></div><div class="a" style="left:1121px;top:1046px;width:19px;height:21px;background:#ff6600"></div><div class="a" style="left:1140px;top:1046px;width:19px;height:21px;background:#ff7f2a"></div><div class="a" style="left:1159px;top:1046px;width:19px;height:21px;background:#ff9955"></div><div class="a" style="left:1178px;top:1046px;width:19px;height:21px;background:#ffb380"></div><div class="a" style="left:1197px;top:1046px;width:19px;height:21px;background:#ffccaa"></div><div class="a" style="left:1216px;top:1046px;width:19px;height:21px;background:#ffe6d5"></div><div class="a" style="left:1235px;top:1046px;width:19px;height:21px;background:#28170b"></div><div class="a" style="left:1254px;top:1046px;width:19px;height:21px;background:#502d16"></div><div class="a" style="left:1273px;top:1046px;width:19px;height:21px;background:#784421"></div><div class="a" style="left:1292px;top:1046px;width:19px;height:21px;background:#a05a2c"></div><div class="a" style="left:1311px;top:1046px;width:19px;height:21px;background:#c87137"></div><div class="a" style="left:1330px;top:1046px;width:19px;height:21px;background:#d38d5f"></div><div class="a" style="left:1349px;top:1046px;width:19px;height:21px;background:#deaa87"></div><div class="a" style="left:1368px;top:1046px;width:19px;height:21px;background:#e9c6af"></div><div class="a" style="left:1387px;top:1046px;width:19px;height:21px;background:#f4e3d7"></div><div class="a" style="left:1406px;top:1046px;width:19px;height:21px;background:#241f1c"></div><div class="a" style="left:1425px;top:1046px;width:19px;height:21px;background:#483e37"></div><div class="a" style="left:1444px;top:1046px;width:19px;height:21px;background:#6c5d53"></div><div class="a" style="left:1463px;top:1046px;width:19px;height:21px;background:#917c6f"></div><div class="a" style="left:1482px;top:1046px;width:19px;height:21px;background:#ac9d93"></div><div class="a" style="left:1501px;top:1046px;width:19px;height:21px;background:#c8beb7"></div><div class="a" style="left:1520px;top:1046px;width:19px;height:21px;background:#e3dedb"></div><div class="a" style="left:1539px;top:1046px;width:19px;height:21px;background:#2b2200"></div><div class="a" style="left:1558px;top:1046px;width:19px;height:21px;background:#554400"></div><div class="a" style="left:1577px;top:1046px;width:19px;height:21px;background:#806600"></div><div class="a" style="left:1596px;top:1046px;width:19px;height:21px;background:#aa8800"></div><div class="a" style="left:1615px;top:1046px;width:19px;height:21px;background:#d4aa00"></div><div class="a" style="left:1634px;top:1046px;width:19px;height:21px;background:#ffcc00"></div><div class="a" style="left:1653px;top:1046px;width:19px;height:21px;background:#ffd42a"></div><div class="a" style="left:1672px;top:1046px;width:19px;height:21px;background:#ffdd55"></div><div class="a" style="left:1691px;top:1046px;width:19px;height:21px;background:#ffe680"></div><div class="a" style="left:1710px;top:1046px;width:19px;height:21px;background:#ffeeaa"></div><div class="a" style="left:1729px;top:1046px;width:19px;height:21px;background:#fff6d5"></div><div class="a" style="left:1748px;top:1046px;width:19px;height:21px;background:#28230b"></div><div class="a" style="left:1767px;top:1046px;width:19px;height:21px;background:#504416"></div><div class="a" style="left:1786px;top:1046px;width:19px;height:21px;background:#786721"></div><div class="a" style="left:1805px;top:1046px;width:11px;height:21px;background:#a0892c"></div><svg style="left:1829px;top:1057px" width="8" height="12" viewBox="0 0 8 12"><path d="M6 0v11L0 5.5z" fill="#eeeeec" /></svg><div class="a" style="left:4px;top:1071px;width:394px;height:6px;background:#a8a8a8;border-radius:3px"></div><div class="a" style="left:1403px;top:1028px;width:16px;height:17px;background:#262626;border-radius:4px"></div><svg style="left:1403px;top:1030px" width="16" height="16" viewBox="0 0 16 16"><circle cx="8" cy="4" r="3.2" fill="none" stroke="#e6e6e6" stroke-width="1.1"/><circle cx="4.3" cy="10.7" r="3.2" fill="none" stroke="#e6e6e6" stroke-width="1.1"/><circle cx="11.7" cy="10.7" r="3.2" fill="none" stroke="#e6e6e6" stroke-width="1.1"/><circle cx="4.3" cy="10.7" r="1.6" fill="#e6e6e6"/><circle cx="11.7" cy="10.7" r="1.6" fill="#e6e6e6"/></svg></body></html>
